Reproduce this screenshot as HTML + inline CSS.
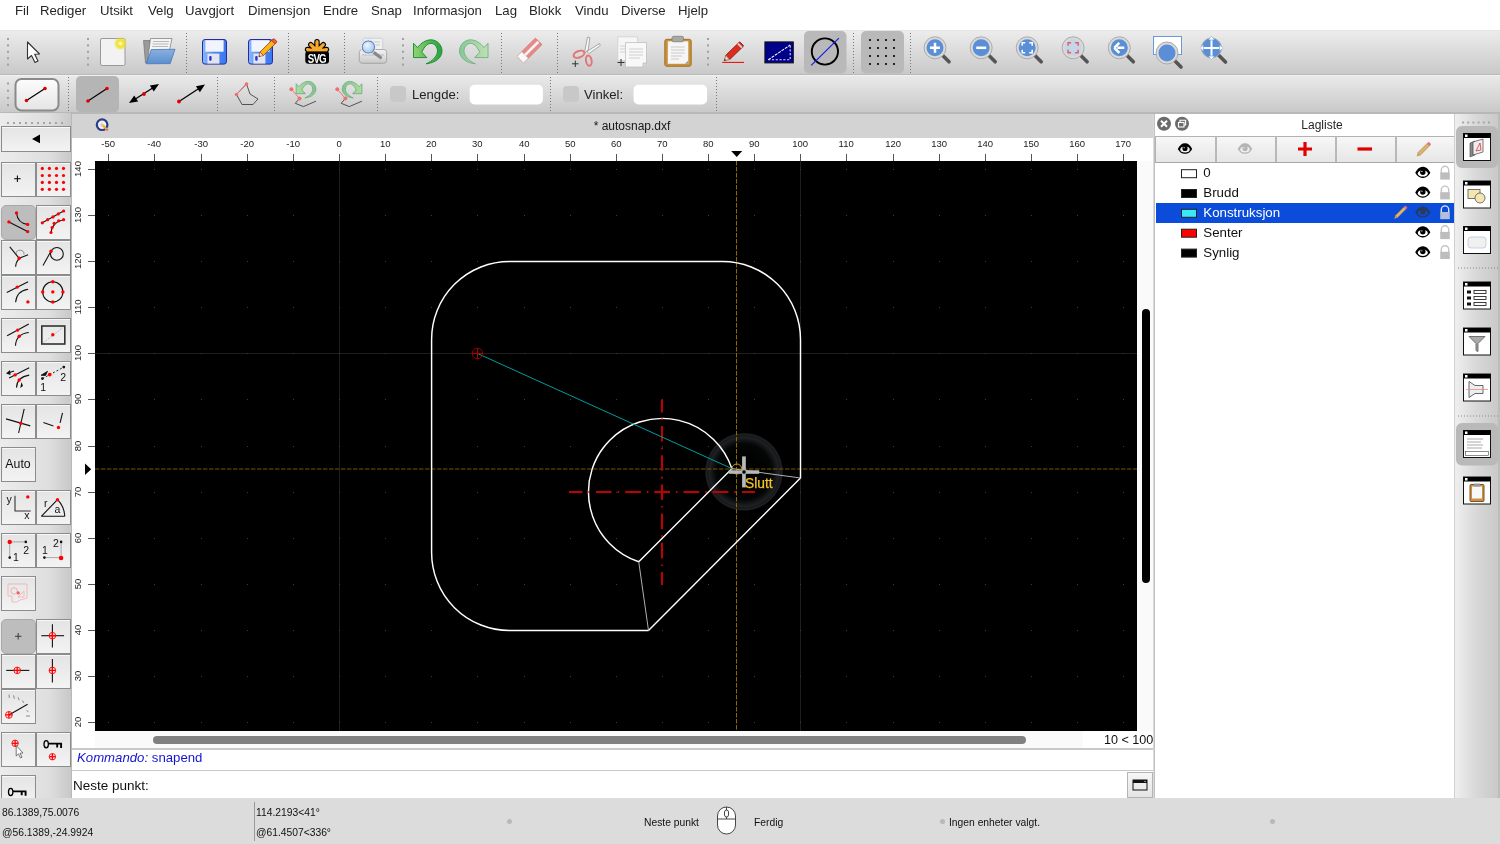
<!DOCTYPE html><html><head><meta charset="utf-8"><style>
html,body{margin:0;padding:0;width:1500px;height:844px;overflow:hidden;background:#fff;font-family:"Liberation Sans", sans-serif;}
.b{position:absolute;box-sizing:border-box;}
.t{position:absolute;white-space:nowrap;line-height:1;font-family:"Liberation Sans", sans-serif;will-change:transform;}
svg.b{overflow:visible;will-change:transform;}
</style></head><body>

<div class="b" style="left:0px;top:0px;width:1500px;height:31px;background:#ffffff;"></div>
<div class="t" style="left:14.50px;top:3.83px;font-size:13.2px;color:#262626;">Fil</div>
<div class="t" style="left:40.30px;top:3.83px;font-size:13.2px;color:#262626;">Rediger</div>
<div class="t" style="left:99.70px;top:3.83px;font-size:13.2px;color:#262626;">Utsikt</div>
<div class="t" style="left:147.70px;top:3.83px;font-size:13.2px;color:#262626;">Velg</div>
<div class="t" style="left:185.30px;top:3.83px;font-size:13.2px;color:#262626;">Uavgjort</div>
<div class="t" style="left:248.30px;top:3.83px;font-size:13.2px;color:#262626;">Dimensjon</div>
<div class="t" style="left:323.30px;top:3.83px;font-size:13.2px;color:#262626;">Endre</div>
<div class="t" style="left:370.70px;top:3.83px;font-size:13.2px;color:#262626;">Snap</div>
<div class="t" style="left:413.30px;top:3.83px;font-size:13.2px;color:#262626;">Informasjon</div>
<div class="t" style="left:495.30px;top:3.83px;font-size:13.2px;color:#262626;">Lag</div>
<div class="t" style="left:529.00px;top:3.83px;font-size:13.2px;color:#262626;">Blokk</div>
<div class="t" style="left:574.70px;top:3.83px;font-size:13.2px;color:#262626;">Vindu</div>
<div class="t" style="left:621.00px;top:3.83px;font-size:13.2px;color:#262626;">Diverse</div>
<div class="t" style="left:678.30px;top:3.83px;font-size:13.2px;color:#262626;">Hjelp</div>
<div class="b" style="left:0px;top:30px;width:1500px;height:1px;background:#e4e4e4;"></div>
<div class="b" style="left:0px;top:31px;width:1500px;height:43px;background:linear-gradient(#ececec,#c9c9c9);"></div>
<div class="b" style="left:0px;top:74px;width:1500px;height:1px;background:#b9b9b9;"></div>
<div class="b" style="left:0px;top:75px;width:1500px;height:1px;background:#f2f2f2;"></div>
<div class="b" style="left:0px;top:76px;width:1500px;height:36px;background:linear-gradient(#e9e9e9,#c9c9c9);"></div>
<div class="b" style="left:0px;top:112px;width:1500px;height:2px;background:#b8b8b8;"></div>
<svg class="b" style="left:0px;top:0px;" width="1500" height="120" viewBox="0 0 1500 120"><rect x="7" y="38" width="2" height="2" fill="#a0a0a0"/><rect x="7" y="44.4" width="2" height="2" fill="#a0a0a0"/><rect x="7" y="50.8" width="2" height="2" fill="#a0a0a0"/><rect x="7" y="57.199999999999996" width="2" height="2" fill="#a0a0a0"/><rect x="7" y="63.599999999999994" width="2" height="2" fill="#a0a0a0"/><rect x="87" y="38" width="2" height="2" fill="#a0a0a0"/><rect x="87" y="44.4" width="2" height="2" fill="#a0a0a0"/><rect x="87" y="50.8" width="2" height="2" fill="#a0a0a0"/><rect x="87" y="57.199999999999996" width="2" height="2" fill="#a0a0a0"/><rect x="87" y="63.599999999999994" width="2" height="2" fill="#a0a0a0"/><rect x="402" y="38" width="2" height="2" fill="#a0a0a0"/><rect x="402" y="44.4" width="2" height="2" fill="#a0a0a0"/><rect x="402" y="50.8" width="2" height="2" fill="#a0a0a0"/><rect x="402" y="57.199999999999996" width="2" height="2" fill="#a0a0a0"/><rect x="402" y="63.599999999999994" width="2" height="2" fill="#a0a0a0"/><rect x="707" y="38" width="2" height="2" fill="#a0a0a0"/><rect x="707" y="44.4" width="2" height="2" fill="#a0a0a0"/><rect x="707" y="50.8" width="2" height="2" fill="#a0a0a0"/><rect x="707" y="57.199999999999996" width="2" height="2" fill="#a0a0a0"/><rect x="707" y="63.599999999999994" width="2" height="2" fill="#a0a0a0"/><rect x="186" y="33" width="1" height="1" fill="#777"/><rect x="186" y="36" width="1" height="1" fill="#777"/><rect x="186" y="39" width="1" height="1" fill="#777"/><rect x="186" y="42" width="1" height="1" fill="#777"/><rect x="186" y="45" width="1" height="1" fill="#777"/><rect x="186" y="48" width="1" height="1" fill="#777"/><rect x="186" y="51" width="1" height="1" fill="#777"/><rect x="186" y="54" width="1" height="1" fill="#777"/><rect x="186" y="57" width="1" height="1" fill="#777"/><rect x="186" y="60" width="1" height="1" fill="#777"/><rect x="186" y="63" width="1" height="1" fill="#777"/><rect x="186" y="66" width="1" height="1" fill="#777"/><rect x="186" y="69" width="1" height="1" fill="#777"/><rect x="186" y="72" width="1" height="1" fill="#777"/><rect x="288" y="33" width="1" height="1" fill="#777"/><rect x="288" y="36" width="1" height="1" fill="#777"/><rect x="288" y="39" width="1" height="1" fill="#777"/><rect x="288" y="42" width="1" height="1" fill="#777"/><rect x="288" y="45" width="1" height="1" fill="#777"/><rect x="288" y="48" width="1" height="1" fill="#777"/><rect x="288" y="51" width="1" height="1" fill="#777"/><rect x="288" y="54" width="1" height="1" fill="#777"/><rect x="288" y="57" width="1" height="1" fill="#777"/><rect x="288" y="60" width="1" height="1" fill="#777"/><rect x="288" y="63" width="1" height="1" fill="#777"/><rect x="288" y="66" width="1" height="1" fill="#777"/><rect x="288" y="69" width="1" height="1" fill="#777"/><rect x="288" y="72" width="1" height="1" fill="#777"/><rect x="344" y="33" width="1" height="1" fill="#777"/><rect x="344" y="36" width="1" height="1" fill="#777"/><rect x="344" y="39" width="1" height="1" fill="#777"/><rect x="344" y="42" width="1" height="1" fill="#777"/><rect x="344" y="45" width="1" height="1" fill="#777"/><rect x="344" y="48" width="1" height="1" fill="#777"/><rect x="344" y="51" width="1" height="1" fill="#777"/><rect x="344" y="54" width="1" height="1" fill="#777"/><rect x="344" y="57" width="1" height="1" fill="#777"/><rect x="344" y="60" width="1" height="1" fill="#777"/><rect x="344" y="63" width="1" height="1" fill="#777"/><rect x="344" y="66" width="1" height="1" fill="#777"/><rect x="344" y="69" width="1" height="1" fill="#777"/><rect x="344" y="72" width="1" height="1" fill="#777"/><rect x="501" y="33" width="1" height="1" fill="#777"/><rect x="501" y="36" width="1" height="1" fill="#777"/><rect x="501" y="39" width="1" height="1" fill="#777"/><rect x="501" y="42" width="1" height="1" fill="#777"/><rect x="501" y="45" width="1" height="1" fill="#777"/><rect x="501" y="48" width="1" height="1" fill="#777"/><rect x="501" y="51" width="1" height="1" fill="#777"/><rect x="501" y="54" width="1" height="1" fill="#777"/><rect x="501" y="57" width="1" height="1" fill="#777"/><rect x="501" y="60" width="1" height="1" fill="#777"/><rect x="501" y="63" width="1" height="1" fill="#777"/><rect x="501" y="66" width="1" height="1" fill="#777"/><rect x="501" y="69" width="1" height="1" fill="#777"/><rect x="501" y="72" width="1" height="1" fill="#777"/><rect x="557" y="33" width="1" height="1" fill="#777"/><rect x="557" y="36" width="1" height="1" fill="#777"/><rect x="557" y="39" width="1" height="1" fill="#777"/><rect x="557" y="42" width="1" height="1" fill="#777"/><rect x="557" y="45" width="1" height="1" fill="#777"/><rect x="557" y="48" width="1" height="1" fill="#777"/><rect x="557" y="51" width="1" height="1" fill="#777"/><rect x="557" y="54" width="1" height="1" fill="#777"/><rect x="557" y="57" width="1" height="1" fill="#777"/><rect x="557" y="60" width="1" height="1" fill="#777"/><rect x="557" y="63" width="1" height="1" fill="#777"/><rect x="557" y="66" width="1" height="1" fill="#777"/><rect x="557" y="69" width="1" height="1" fill="#777"/><rect x="557" y="72" width="1" height="1" fill="#777"/><rect x="853" y="33" width="1" height="1" fill="#777"/><rect x="853" y="36" width="1" height="1" fill="#777"/><rect x="853" y="39" width="1" height="1" fill="#777"/><rect x="853" y="42" width="1" height="1" fill="#777"/><rect x="853" y="45" width="1" height="1" fill="#777"/><rect x="853" y="48" width="1" height="1" fill="#777"/><rect x="853" y="51" width="1" height="1" fill="#777"/><rect x="853" y="54" width="1" height="1" fill="#777"/><rect x="853" y="57" width="1" height="1" fill="#777"/><rect x="853" y="60" width="1" height="1" fill="#777"/><rect x="853" y="63" width="1" height="1" fill="#777"/><rect x="853" y="66" width="1" height="1" fill="#777"/><rect x="853" y="69" width="1" height="1" fill="#777"/><rect x="853" y="72" width="1" height="1" fill="#777"/><rect x="910" y="33" width="1" height="1" fill="#777"/><rect x="910" y="36" width="1" height="1" fill="#777"/><rect x="910" y="39" width="1" height="1" fill="#777"/><rect x="910" y="42" width="1" height="1" fill="#777"/><rect x="910" y="45" width="1" height="1" fill="#777"/><rect x="910" y="48" width="1" height="1" fill="#777"/><rect x="910" y="51" width="1" height="1" fill="#777"/><rect x="910" y="54" width="1" height="1" fill="#777"/><rect x="910" y="57" width="1" height="1" fill="#777"/><rect x="910" y="60" width="1" height="1" fill="#777"/><rect x="910" y="63" width="1" height="1" fill="#777"/><rect x="910" y="66" width="1" height="1" fill="#777"/><rect x="910" y="69" width="1" height="1" fill="#777"/><rect x="910" y="72" width="1" height="1" fill="#777"/><rect x="7" y="82.5" width="2" height="2" fill="#a0a0a0"/><rect x="7" y="89.7" width="2" height="2" fill="#a0a0a0"/><rect x="7" y="96.9" width="2" height="2" fill="#a0a0a0"/><rect x="7" y="104.1" width="2" height="2" fill="#a0a0a0"/><rect x="68" y="77" width="1" height="1" fill="#777"/><rect x="68" y="80" width="1" height="1" fill="#777"/><rect x="68" y="83" width="1" height="1" fill="#777"/><rect x="68" y="86" width="1" height="1" fill="#777"/><rect x="68" y="89" width="1" height="1" fill="#777"/><rect x="68" y="92" width="1" height="1" fill="#777"/><rect x="68" y="95" width="1" height="1" fill="#777"/><rect x="68" y="98" width="1" height="1" fill="#777"/><rect x="68" y="101" width="1" height="1" fill="#777"/><rect x="68" y="104" width="1" height="1" fill="#777"/><rect x="68" y="107" width="1" height="1" fill="#777"/><rect x="68" y="110" width="1" height="1" fill="#777"/><rect x="217" y="77" width="1" height="1" fill="#777"/><rect x="217" y="80" width="1" height="1" fill="#777"/><rect x="217" y="83" width="1" height="1" fill="#777"/><rect x="217" y="86" width="1" height="1" fill="#777"/><rect x="217" y="89" width="1" height="1" fill="#777"/><rect x="217" y="92" width="1" height="1" fill="#777"/><rect x="217" y="95" width="1" height="1" fill="#777"/><rect x="217" y="98" width="1" height="1" fill="#777"/><rect x="217" y="101" width="1" height="1" fill="#777"/><rect x="217" y="104" width="1" height="1" fill="#777"/><rect x="217" y="107" width="1" height="1" fill="#777"/><rect x="217" y="110" width="1" height="1" fill="#777"/><rect x="274" y="77" width="1" height="1" fill="#777"/><rect x="274" y="80" width="1" height="1" fill="#777"/><rect x="274" y="83" width="1" height="1" fill="#777"/><rect x="274" y="86" width="1" height="1" fill="#777"/><rect x="274" y="89" width="1" height="1" fill="#777"/><rect x="274" y="92" width="1" height="1" fill="#777"/><rect x="274" y="95" width="1" height="1" fill="#777"/><rect x="274" y="98" width="1" height="1" fill="#777"/><rect x="274" y="101" width="1" height="1" fill="#777"/><rect x="274" y="104" width="1" height="1" fill="#777"/><rect x="274" y="107" width="1" height="1" fill="#777"/><rect x="274" y="110" width="1" height="1" fill="#777"/><rect x="377" y="77" width="1" height="1" fill="#777"/><rect x="377" y="80" width="1" height="1" fill="#777"/><rect x="377" y="83" width="1" height="1" fill="#777"/><rect x="377" y="86" width="1" height="1" fill="#777"/><rect x="377" y="89" width="1" height="1" fill="#777"/><rect x="377" y="92" width="1" height="1" fill="#777"/><rect x="377" y="95" width="1" height="1" fill="#777"/><rect x="377" y="98" width="1" height="1" fill="#777"/><rect x="377" y="101" width="1" height="1" fill="#777"/><rect x="377" y="104" width="1" height="1" fill="#777"/><rect x="377" y="107" width="1" height="1" fill="#777"/><rect x="377" y="110" width="1" height="1" fill="#777"/><rect x="550" y="77" width="1" height="1" fill="#777"/><rect x="550" y="80" width="1" height="1" fill="#777"/><rect x="550" y="83" width="1" height="1" fill="#777"/><rect x="550" y="86" width="1" height="1" fill="#777"/><rect x="550" y="89" width="1" height="1" fill="#777"/><rect x="550" y="92" width="1" height="1" fill="#777"/><rect x="550" y="95" width="1" height="1" fill="#777"/><rect x="550" y="98" width="1" height="1" fill="#777"/><rect x="550" y="101" width="1" height="1" fill="#777"/><rect x="550" y="104" width="1" height="1" fill="#777"/><rect x="550" y="107" width="1" height="1" fill="#777"/><rect x="550" y="110" width="1" height="1" fill="#777"/><rect x="716" y="77" width="1" height="1" fill="#777"/><rect x="716" y="80" width="1" height="1" fill="#777"/><rect x="716" y="83" width="1" height="1" fill="#777"/><rect x="716" y="86" width="1" height="1" fill="#777"/><rect x="716" y="89" width="1" height="1" fill="#777"/><rect x="716" y="92" width="1" height="1" fill="#777"/><rect x="716" y="95" width="1" height="1" fill="#777"/><rect x="716" y="98" width="1" height="1" fill="#777"/><rect x="716" y="101" width="1" height="1" fill="#777"/><rect x="716" y="104" width="1" height="1" fill="#777"/><rect x="716" y="107" width="1" height="1" fill="#777"/><rect x="716" y="110" width="1" height="1" fill="#777"/></svg>
<div class="b" style="left:72px;top:114px;width:1083px;height:24px;background:#d3d3d3;"></div>
<div class="t" style="left:432.00px;width:400px;text-align:center;top:119.64px;font-size:12px;color:#161616;">* autosnap.dxf</div>
<div class="b" style="left:72px;top:138px;width:1083px;height:23px;background:#ffffff;"></div>
<div class="b" style="left:72px;top:161px;width:23px;height:588px;background:#ffffff;"></div>
<div class="b" style="left:1137px;top:161px;width:18px;height:570px;background:#fafafa;"></div>
<div class="b" style="left:95px;top:731px;width:988px;height:18px;background:#fafafa;"></div>
<div class="b" style="left:1083px;top:731px;width:72px;height:18px;background:#ffffff;"></div>
<div class="b" style="left:1142px;top:309px;width:8px;height:274px;background:#000;border-radius:4px;"></div>
<div class="b" style="left:152.5px;top:736px;width:873px;height:8px;background:#808080;border-radius:4px;"></div>
<div class="t" style="right:347.00px;top:733.83px;font-size:12.6px;color:#111;">10 &lt; 100</div>
<svg class="b" style="left:0px;top:0px;" width="1500" height="844" viewBox="0 0 1500 844"><line x1="108.5" y1="154" x2="108.5" y2="161" stroke="#555" stroke-width="1"/><text x="108.2" y="147.1" font-size="9.5" text-anchor="middle" fill="#222" font-family="Liberation Sans">-50</text><line x1="154.5" y1="154" x2="154.5" y2="161" stroke="#555" stroke-width="1"/><text x="154.2" y="147.1" font-size="9.5" text-anchor="middle" fill="#222" font-family="Liberation Sans">-40</text><line x1="201.5" y1="154" x2="201.5" y2="161" stroke="#555" stroke-width="1"/><text x="201.2" y="147.1" font-size="9.5" text-anchor="middle" fill="#222" font-family="Liberation Sans">-30</text><line x1="247.5" y1="154" x2="247.5" y2="161" stroke="#555" stroke-width="1"/><text x="247.2" y="147.1" font-size="9.5" text-anchor="middle" fill="#222" font-family="Liberation Sans">-20</text><line x1="293.5" y1="154" x2="293.5" y2="161" stroke="#555" stroke-width="1"/><text x="293.2" y="147.1" font-size="9.5" text-anchor="middle" fill="#222" font-family="Liberation Sans">-10</text><line x1="339.5" y1="154" x2="339.5" y2="161" stroke="#555" stroke-width="1"/><text x="339.2" y="147.1" font-size="9.5" text-anchor="middle" fill="#222" font-family="Liberation Sans">0</text><line x1="385.5" y1="154" x2="385.5" y2="161" stroke="#555" stroke-width="1"/><text x="385.2" y="147.1" font-size="9.5" text-anchor="middle" fill="#222" font-family="Liberation Sans">10</text><line x1="431.5" y1="154" x2="431.5" y2="161" stroke="#555" stroke-width="1"/><text x="431.2" y="147.1" font-size="9.5" text-anchor="middle" fill="#222" font-family="Liberation Sans">20</text><line x1="477.5" y1="154" x2="477.5" y2="161" stroke="#555" stroke-width="1"/><text x="477.2" y="147.1" font-size="9.5" text-anchor="middle" fill="#222" font-family="Liberation Sans">30</text><line x1="524.5" y1="154" x2="524.5" y2="161" stroke="#555" stroke-width="1"/><text x="524.2" y="147.1" font-size="9.5" text-anchor="middle" fill="#222" font-family="Liberation Sans">40</text><line x1="570.5" y1="154" x2="570.5" y2="161" stroke="#555" stroke-width="1"/><text x="570.2" y="147.1" font-size="9.5" text-anchor="middle" fill="#222" font-family="Liberation Sans">50</text><line x1="616.5" y1="154" x2="616.5" y2="161" stroke="#555" stroke-width="1"/><text x="616.2" y="147.1" font-size="9.5" text-anchor="middle" fill="#222" font-family="Liberation Sans">60</text><line x1="662.5" y1="154" x2="662.5" y2="161" stroke="#555" stroke-width="1"/><text x="662.2" y="147.1" font-size="9.5" text-anchor="middle" fill="#222" font-family="Liberation Sans">70</text><line x1="708.5" y1="154" x2="708.5" y2="161" stroke="#555" stroke-width="1"/><text x="708.2" y="147.1" font-size="9.5" text-anchor="middle" fill="#222" font-family="Liberation Sans">80</text><line x1="754.5" y1="154" x2="754.5" y2="161" stroke="#555" stroke-width="1"/><text x="754.2" y="147.1" font-size="9.5" text-anchor="middle" fill="#222" font-family="Liberation Sans">90</text><line x1="800.5" y1="154" x2="800.5" y2="161" stroke="#555" stroke-width="1"/><text x="800.2" y="147.1" font-size="9.5" text-anchor="middle" fill="#222" font-family="Liberation Sans">100</text><line x1="846.5" y1="154" x2="846.5" y2="161" stroke="#555" stroke-width="1"/><text x="846.2" y="147.1" font-size="9.5" text-anchor="middle" fill="#222" font-family="Liberation Sans">110</text><line x1="893.5" y1="154" x2="893.5" y2="161" stroke="#555" stroke-width="1"/><text x="893.2" y="147.1" font-size="9.5" text-anchor="middle" fill="#222" font-family="Liberation Sans">120</text><line x1="939.5" y1="154" x2="939.5" y2="161" stroke="#555" stroke-width="1"/><text x="939.2" y="147.1" font-size="9.5" text-anchor="middle" fill="#222" font-family="Liberation Sans">130</text><line x1="985.5" y1="154" x2="985.5" y2="161" stroke="#555" stroke-width="1"/><text x="985.2" y="147.1" font-size="9.5" text-anchor="middle" fill="#222" font-family="Liberation Sans">140</text><line x1="1031.5" y1="154" x2="1031.5" y2="161" stroke="#555" stroke-width="1"/><text x="1031.2" y="147.1" font-size="9.5" text-anchor="middle" fill="#222" font-family="Liberation Sans">150</text><line x1="1077.5" y1="154" x2="1077.5" y2="161" stroke="#555" stroke-width="1"/><text x="1077.2" y="147.1" font-size="9.5" text-anchor="middle" fill="#222" font-family="Liberation Sans">160</text><line x1="1123.5" y1="154" x2="1123.5" y2="161" stroke="#555" stroke-width="1"/><text x="1123.2" y="147.1" font-size="9.5" text-anchor="middle" fill="#222" font-family="Liberation Sans">170</text><line x1="88" y1="722.5" x2="95" y2="722.5" stroke="#555" stroke-width="1"/><text transform="translate(81.0 722.0) rotate(-90)" x="0" y="0" font-size="9.5" text-anchor="middle" fill="#222" font-family="Liberation Sans">20</text><line x1="88" y1="676.5" x2="95" y2="676.5" stroke="#555" stroke-width="1"/><text transform="translate(81.0 676.0) rotate(-90)" x="0" y="0" font-size="9.5" text-anchor="middle" fill="#222" font-family="Liberation Sans">30</text><line x1="88" y1="630.5" x2="95" y2="630.5" stroke="#555" stroke-width="1"/><text transform="translate(81.0 630.0) rotate(-90)" x="0" y="0" font-size="9.5" text-anchor="middle" fill="#222" font-family="Liberation Sans">40</text><line x1="88" y1="584.5" x2="95" y2="584.5" stroke="#555" stroke-width="1"/><text transform="translate(81.0 584.0) rotate(-90)" x="0" y="0" font-size="9.5" text-anchor="middle" fill="#222" font-family="Liberation Sans">50</text><line x1="88" y1="538.5" x2="95" y2="538.5" stroke="#555" stroke-width="1"/><text transform="translate(81.0 538.0) rotate(-90)" x="0" y="0" font-size="9.5" text-anchor="middle" fill="#222" font-family="Liberation Sans">60</text><line x1="88" y1="492.5" x2="95" y2="492.5" stroke="#555" stroke-width="1"/><text transform="translate(81.0 492.0) rotate(-90)" x="0" y="0" font-size="9.5" text-anchor="middle" fill="#222" font-family="Liberation Sans">70</text><line x1="88" y1="446.5" x2="95" y2="446.5" stroke="#555" stroke-width="1"/><text transform="translate(81.0 446.0) rotate(-90)" x="0" y="0" font-size="9.5" text-anchor="middle" fill="#222" font-family="Liberation Sans">80</text><line x1="88" y1="399.5" x2="95" y2="399.5" stroke="#555" stroke-width="1"/><text transform="translate(81.0 399.0) rotate(-90)" x="0" y="0" font-size="9.5" text-anchor="middle" fill="#222" font-family="Liberation Sans">90</text><line x1="88" y1="353.5" x2="95" y2="353.5" stroke="#555" stroke-width="1"/><text transform="translate(81.0 353.0) rotate(-90)" x="0" y="0" font-size="9.5" text-anchor="middle" fill="#222" font-family="Liberation Sans">100</text><line x1="88" y1="307.5" x2="95" y2="307.5" stroke="#555" stroke-width="1"/><text transform="translate(81.0 307.0) rotate(-90)" x="0" y="0" font-size="9.5" text-anchor="middle" fill="#222" font-family="Liberation Sans">110</text><line x1="88" y1="261.5" x2="95" y2="261.5" stroke="#555" stroke-width="1"/><text transform="translate(81.0 261.0) rotate(-90)" x="0" y="0" font-size="9.5" text-anchor="middle" fill="#222" font-family="Liberation Sans">120</text><line x1="88" y1="215.5" x2="95" y2="215.5" stroke="#555" stroke-width="1"/><text transform="translate(81.0 215.0) rotate(-90)" x="0" y="0" font-size="9.5" text-anchor="middle" fill="#222" font-family="Liberation Sans">130</text><line x1="88" y1="169.5" x2="95" y2="169.5" stroke="#555" stroke-width="1"/><text transform="translate(81.0 169.0) rotate(-90)" x="0" y="0" font-size="9.5" text-anchor="middle" fill="#222" font-family="Liberation Sans">140</text><polygon points="731.2,151 742.2,151 736.7,157" fill="#000"/><polygon points="85,463.6 91.2,469.3 85,475" fill="#000"/></svg>
<svg class="b" style="left:95px;top:161px;" width="1042" height="570" viewBox="0 0 1042 570"><rect x="0" y="0" width="1042" height="570" fill="#000"/><line x1="244.5" y1="0" x2="244.5" y2="570" stroke="#1e1e1e" stroke-width="1"/><line x1="705.5" y1="0" x2="705.5" y2="570" stroke="#1e1e1e" stroke-width="1"/><line x1="0" y1="192.5" x2="1042" y2="192.5" stroke="#1e1e1e" stroke-width="1"/><rect x="13" y="561" width="1" height="1" fill="#3c3c3c"/><rect x="13" y="515" width="1" height="1" fill="#3c3c3c"/><rect x="13" y="469" width="1" height="1" fill="#3c3c3c"/><rect x="13" y="423" width="1" height="1" fill="#3c3c3c"/><rect x="13" y="377" width="1" height="1" fill="#3c3c3c"/><rect x="13" y="331" width="1" height="1" fill="#3c3c3c"/><rect x="13" y="285" width="1" height="1" fill="#3c3c3c"/><rect x="13" y="238" width="1" height="1" fill="#3c3c3c"/><rect x="13" y="192" width="1" height="1" fill="#3c3c3c"/><rect x="13" y="146" width="1" height="1" fill="#3c3c3c"/><rect x="13" y="100" width="1" height="1" fill="#3c3c3c"/><rect x="13" y="54" width="1" height="1" fill="#3c3c3c"/><rect x="13" y="8" width="1" height="1" fill="#3c3c3c"/><rect x="59" y="561" width="1" height="1" fill="#3c3c3c"/><rect x="59" y="515" width="1" height="1" fill="#3c3c3c"/><rect x="59" y="469" width="1" height="1" fill="#3c3c3c"/><rect x="59" y="423" width="1" height="1" fill="#3c3c3c"/><rect x="59" y="377" width="1" height="1" fill="#3c3c3c"/><rect x="59" y="331" width="1" height="1" fill="#3c3c3c"/><rect x="59" y="285" width="1" height="1" fill="#3c3c3c"/><rect x="59" y="238" width="1" height="1" fill="#3c3c3c"/><rect x="59" y="192" width="1" height="1" fill="#3c3c3c"/><rect x="59" y="146" width="1" height="1" fill="#3c3c3c"/><rect x="59" y="100" width="1" height="1" fill="#3c3c3c"/><rect x="59" y="54" width="1" height="1" fill="#3c3c3c"/><rect x="59" y="8" width="1" height="1" fill="#3c3c3c"/><rect x="106" y="561" width="1" height="1" fill="#3c3c3c"/><rect x="106" y="515" width="1" height="1" fill="#3c3c3c"/><rect x="106" y="469" width="1" height="1" fill="#3c3c3c"/><rect x="106" y="423" width="1" height="1" fill="#3c3c3c"/><rect x="106" y="377" width="1" height="1" fill="#3c3c3c"/><rect x="106" y="331" width="1" height="1" fill="#3c3c3c"/><rect x="106" y="285" width="1" height="1" fill="#3c3c3c"/><rect x="106" y="238" width="1" height="1" fill="#3c3c3c"/><rect x="106" y="192" width="1" height="1" fill="#3c3c3c"/><rect x="106" y="146" width="1" height="1" fill="#3c3c3c"/><rect x="106" y="100" width="1" height="1" fill="#3c3c3c"/><rect x="106" y="54" width="1" height="1" fill="#3c3c3c"/><rect x="106" y="8" width="1" height="1" fill="#3c3c3c"/><rect x="152" y="561" width="1" height="1" fill="#3c3c3c"/><rect x="152" y="515" width="1" height="1" fill="#3c3c3c"/><rect x="152" y="469" width="1" height="1" fill="#3c3c3c"/><rect x="152" y="423" width="1" height="1" fill="#3c3c3c"/><rect x="152" y="377" width="1" height="1" fill="#3c3c3c"/><rect x="152" y="331" width="1" height="1" fill="#3c3c3c"/><rect x="152" y="285" width="1" height="1" fill="#3c3c3c"/><rect x="152" y="238" width="1" height="1" fill="#3c3c3c"/><rect x="152" y="192" width="1" height="1" fill="#3c3c3c"/><rect x="152" y="146" width="1" height="1" fill="#3c3c3c"/><rect x="152" y="100" width="1" height="1" fill="#3c3c3c"/><rect x="152" y="54" width="1" height="1" fill="#3c3c3c"/><rect x="152" y="8" width="1" height="1" fill="#3c3c3c"/><rect x="198" y="561" width="1" height="1" fill="#3c3c3c"/><rect x="198" y="515" width="1" height="1" fill="#3c3c3c"/><rect x="198" y="469" width="1" height="1" fill="#3c3c3c"/><rect x="198" y="423" width="1" height="1" fill="#3c3c3c"/><rect x="198" y="377" width="1" height="1" fill="#3c3c3c"/><rect x="198" y="331" width="1" height="1" fill="#3c3c3c"/><rect x="198" y="285" width="1" height="1" fill="#3c3c3c"/><rect x="198" y="238" width="1" height="1" fill="#3c3c3c"/><rect x="198" y="192" width="1" height="1" fill="#3c3c3c"/><rect x="198" y="146" width="1" height="1" fill="#3c3c3c"/><rect x="198" y="100" width="1" height="1" fill="#3c3c3c"/><rect x="198" y="54" width="1" height="1" fill="#3c3c3c"/><rect x="198" y="8" width="1" height="1" fill="#3c3c3c"/><rect x="244" y="561" width="1" height="1" fill="#3c3c3c"/><rect x="244" y="515" width="1" height="1" fill="#3c3c3c"/><rect x="244" y="469" width="1" height="1" fill="#3c3c3c"/><rect x="244" y="423" width="1" height="1" fill="#3c3c3c"/><rect x="244" y="377" width="1" height="1" fill="#3c3c3c"/><rect x="244" y="331" width="1" height="1" fill="#3c3c3c"/><rect x="244" y="285" width="1" height="1" fill="#3c3c3c"/><rect x="244" y="238" width="1" height="1" fill="#3c3c3c"/><rect x="244" y="192" width="1" height="1" fill="#3c3c3c"/><rect x="244" y="146" width="1" height="1" fill="#3c3c3c"/><rect x="244" y="100" width="1" height="1" fill="#3c3c3c"/><rect x="244" y="54" width="1" height="1" fill="#3c3c3c"/><rect x="244" y="8" width="1" height="1" fill="#3c3c3c"/><rect x="290" y="561" width="1" height="1" fill="#3c3c3c"/><rect x="290" y="515" width="1" height="1" fill="#3c3c3c"/><rect x="290" y="469" width="1" height="1" fill="#3c3c3c"/><rect x="290" y="423" width="1" height="1" fill="#3c3c3c"/><rect x="290" y="377" width="1" height="1" fill="#3c3c3c"/><rect x="290" y="331" width="1" height="1" fill="#3c3c3c"/><rect x="290" y="285" width="1" height="1" fill="#3c3c3c"/><rect x="290" y="238" width="1" height="1" fill="#3c3c3c"/><rect x="290" y="192" width="1" height="1" fill="#3c3c3c"/><rect x="290" y="146" width="1" height="1" fill="#3c3c3c"/><rect x="290" y="100" width="1" height="1" fill="#3c3c3c"/><rect x="290" y="54" width="1" height="1" fill="#3c3c3c"/><rect x="290" y="8" width="1" height="1" fill="#3c3c3c"/><rect x="336" y="561" width="1" height="1" fill="#3c3c3c"/><rect x="336" y="515" width="1" height="1" fill="#3c3c3c"/><rect x="336" y="469" width="1" height="1" fill="#3c3c3c"/><rect x="336" y="423" width="1" height="1" fill="#3c3c3c"/><rect x="336" y="377" width="1" height="1" fill="#3c3c3c"/><rect x="336" y="331" width="1" height="1" fill="#3c3c3c"/><rect x="336" y="285" width="1" height="1" fill="#3c3c3c"/><rect x="336" y="238" width="1" height="1" fill="#3c3c3c"/><rect x="336" y="192" width="1" height="1" fill="#3c3c3c"/><rect x="336" y="146" width="1" height="1" fill="#3c3c3c"/><rect x="336" y="100" width="1" height="1" fill="#3c3c3c"/><rect x="336" y="54" width="1" height="1" fill="#3c3c3c"/><rect x="336" y="8" width="1" height="1" fill="#3c3c3c"/><rect x="382" y="561" width="1" height="1" fill="#3c3c3c"/><rect x="382" y="515" width="1" height="1" fill="#3c3c3c"/><rect x="382" y="469" width="1" height="1" fill="#3c3c3c"/><rect x="382" y="423" width="1" height="1" fill="#3c3c3c"/><rect x="382" y="377" width="1" height="1" fill="#3c3c3c"/><rect x="382" y="331" width="1" height="1" fill="#3c3c3c"/><rect x="382" y="285" width="1" height="1" fill="#3c3c3c"/><rect x="382" y="238" width="1" height="1" fill="#3c3c3c"/><rect x="382" y="192" width="1" height="1" fill="#3c3c3c"/><rect x="382" y="146" width="1" height="1" fill="#3c3c3c"/><rect x="382" y="100" width="1" height="1" fill="#3c3c3c"/><rect x="382" y="54" width="1" height="1" fill="#3c3c3c"/><rect x="382" y="8" width="1" height="1" fill="#3c3c3c"/><rect x="429" y="561" width="1" height="1" fill="#3c3c3c"/><rect x="429" y="515" width="1" height="1" fill="#3c3c3c"/><rect x="429" y="469" width="1" height="1" fill="#3c3c3c"/><rect x="429" y="423" width="1" height="1" fill="#3c3c3c"/><rect x="429" y="377" width="1" height="1" fill="#3c3c3c"/><rect x="429" y="331" width="1" height="1" fill="#3c3c3c"/><rect x="429" y="285" width="1" height="1" fill="#3c3c3c"/><rect x="429" y="238" width="1" height="1" fill="#3c3c3c"/><rect x="429" y="192" width="1" height="1" fill="#3c3c3c"/><rect x="429" y="146" width="1" height="1" fill="#3c3c3c"/><rect x="429" y="100" width="1" height="1" fill="#3c3c3c"/><rect x="429" y="54" width="1" height="1" fill="#3c3c3c"/><rect x="429" y="8" width="1" height="1" fill="#3c3c3c"/><rect x="475" y="561" width="1" height="1" fill="#3c3c3c"/><rect x="475" y="515" width="1" height="1" fill="#3c3c3c"/><rect x="475" y="469" width="1" height="1" fill="#3c3c3c"/><rect x="475" y="423" width="1" height="1" fill="#3c3c3c"/><rect x="475" y="377" width="1" height="1" fill="#3c3c3c"/><rect x="475" y="331" width="1" height="1" fill="#3c3c3c"/><rect x="475" y="285" width="1" height="1" fill="#3c3c3c"/><rect x="475" y="238" width="1" height="1" fill="#3c3c3c"/><rect x="475" y="192" width="1" height="1" fill="#3c3c3c"/><rect x="475" y="146" width="1" height="1" fill="#3c3c3c"/><rect x="475" y="100" width="1" height="1" fill="#3c3c3c"/><rect x="475" y="54" width="1" height="1" fill="#3c3c3c"/><rect x="475" y="8" width="1" height="1" fill="#3c3c3c"/><rect x="521" y="561" width="1" height="1" fill="#3c3c3c"/><rect x="521" y="515" width="1" height="1" fill="#3c3c3c"/><rect x="521" y="469" width="1" height="1" fill="#3c3c3c"/><rect x="521" y="423" width="1" height="1" fill="#3c3c3c"/><rect x="521" y="377" width="1" height="1" fill="#3c3c3c"/><rect x="521" y="331" width="1" height="1" fill="#3c3c3c"/><rect x="521" y="285" width="1" height="1" fill="#3c3c3c"/><rect x="521" y="238" width="1" height="1" fill="#3c3c3c"/><rect x="521" y="192" width="1" height="1" fill="#3c3c3c"/><rect x="521" y="146" width="1" height="1" fill="#3c3c3c"/><rect x="521" y="100" width="1" height="1" fill="#3c3c3c"/><rect x="521" y="54" width="1" height="1" fill="#3c3c3c"/><rect x="521" y="8" width="1" height="1" fill="#3c3c3c"/><rect x="567" y="561" width="1" height="1" fill="#3c3c3c"/><rect x="567" y="515" width="1" height="1" fill="#3c3c3c"/><rect x="567" y="469" width="1" height="1" fill="#3c3c3c"/><rect x="567" y="423" width="1" height="1" fill="#3c3c3c"/><rect x="567" y="377" width="1" height="1" fill="#3c3c3c"/><rect x="567" y="331" width="1" height="1" fill="#3c3c3c"/><rect x="567" y="285" width="1" height="1" fill="#3c3c3c"/><rect x="567" y="238" width="1" height="1" fill="#3c3c3c"/><rect x="567" y="192" width="1" height="1" fill="#3c3c3c"/><rect x="567" y="146" width="1" height="1" fill="#3c3c3c"/><rect x="567" y="100" width="1" height="1" fill="#3c3c3c"/><rect x="567" y="54" width="1" height="1" fill="#3c3c3c"/><rect x="567" y="8" width="1" height="1" fill="#3c3c3c"/><rect x="613" y="561" width="1" height="1" fill="#3c3c3c"/><rect x="613" y="515" width="1" height="1" fill="#3c3c3c"/><rect x="613" y="469" width="1" height="1" fill="#3c3c3c"/><rect x="613" y="423" width="1" height="1" fill="#3c3c3c"/><rect x="613" y="377" width="1" height="1" fill="#3c3c3c"/><rect x="613" y="331" width="1" height="1" fill="#3c3c3c"/><rect x="613" y="285" width="1" height="1" fill="#3c3c3c"/><rect x="613" y="238" width="1" height="1" fill="#3c3c3c"/><rect x="613" y="192" width="1" height="1" fill="#3c3c3c"/><rect x="613" y="146" width="1" height="1" fill="#3c3c3c"/><rect x="613" y="100" width="1" height="1" fill="#3c3c3c"/><rect x="613" y="54" width="1" height="1" fill="#3c3c3c"/><rect x="613" y="8" width="1" height="1" fill="#3c3c3c"/><rect x="659" y="561" width="1" height="1" fill="#3c3c3c"/><rect x="659" y="515" width="1" height="1" fill="#3c3c3c"/><rect x="659" y="469" width="1" height="1" fill="#3c3c3c"/><rect x="659" y="423" width="1" height="1" fill="#3c3c3c"/><rect x="659" y="377" width="1" height="1" fill="#3c3c3c"/><rect x="659" y="331" width="1" height="1" fill="#3c3c3c"/><rect x="659" y="285" width="1" height="1" fill="#3c3c3c"/><rect x="659" y="238" width="1" height="1" fill="#3c3c3c"/><rect x="659" y="192" width="1" height="1" fill="#3c3c3c"/><rect x="659" y="146" width="1" height="1" fill="#3c3c3c"/><rect x="659" y="100" width="1" height="1" fill="#3c3c3c"/><rect x="659" y="54" width="1" height="1" fill="#3c3c3c"/><rect x="659" y="8" width="1" height="1" fill="#3c3c3c"/><rect x="705" y="561" width="1" height="1" fill="#3c3c3c"/><rect x="705" y="515" width="1" height="1" fill="#3c3c3c"/><rect x="705" y="469" width="1" height="1" fill="#3c3c3c"/><rect x="705" y="423" width="1" height="1" fill="#3c3c3c"/><rect x="705" y="377" width="1" height="1" fill="#3c3c3c"/><rect x="705" y="331" width="1" height="1" fill="#3c3c3c"/><rect x="705" y="285" width="1" height="1" fill="#3c3c3c"/><rect x="705" y="238" width="1" height="1" fill="#3c3c3c"/><rect x="705" y="192" width="1" height="1" fill="#3c3c3c"/><rect x="705" y="146" width="1" height="1" fill="#3c3c3c"/><rect x="705" y="100" width="1" height="1" fill="#3c3c3c"/><rect x="705" y="54" width="1" height="1" fill="#3c3c3c"/><rect x="705" y="8" width="1" height="1" fill="#3c3c3c"/><rect x="751" y="561" width="1" height="1" fill="#3c3c3c"/><rect x="751" y="515" width="1" height="1" fill="#3c3c3c"/><rect x="751" y="469" width="1" height="1" fill="#3c3c3c"/><rect x="751" y="423" width="1" height="1" fill="#3c3c3c"/><rect x="751" y="377" width="1" height="1" fill="#3c3c3c"/><rect x="751" y="331" width="1" height="1" fill="#3c3c3c"/><rect x="751" y="285" width="1" height="1" fill="#3c3c3c"/><rect x="751" y="238" width="1" height="1" fill="#3c3c3c"/><rect x="751" y="192" width="1" height="1" fill="#3c3c3c"/><rect x="751" y="146" width="1" height="1" fill="#3c3c3c"/><rect x="751" y="100" width="1" height="1" fill="#3c3c3c"/><rect x="751" y="54" width="1" height="1" fill="#3c3c3c"/><rect x="751" y="8" width="1" height="1" fill="#3c3c3c"/><rect x="798" y="561" width="1" height="1" fill="#3c3c3c"/><rect x="798" y="515" width="1" height="1" fill="#3c3c3c"/><rect x="798" y="469" width="1" height="1" fill="#3c3c3c"/><rect x="798" y="423" width="1" height="1" fill="#3c3c3c"/><rect x="798" y="377" width="1" height="1" fill="#3c3c3c"/><rect x="798" y="331" width="1" height="1" fill="#3c3c3c"/><rect x="798" y="285" width="1" height="1" fill="#3c3c3c"/><rect x="798" y="238" width="1" height="1" fill="#3c3c3c"/><rect x="798" y="192" width="1" height="1" fill="#3c3c3c"/><rect x="798" y="146" width="1" height="1" fill="#3c3c3c"/><rect x="798" y="100" width="1" height="1" fill="#3c3c3c"/><rect x="798" y="54" width="1" height="1" fill="#3c3c3c"/><rect x="798" y="8" width="1" height="1" fill="#3c3c3c"/><rect x="844" y="561" width="1" height="1" fill="#3c3c3c"/><rect x="844" y="515" width="1" height="1" fill="#3c3c3c"/><rect x="844" y="469" width="1" height="1" fill="#3c3c3c"/><rect x="844" y="423" width="1" height="1" fill="#3c3c3c"/><rect x="844" y="377" width="1" height="1" fill="#3c3c3c"/><rect x="844" y="331" width="1" height="1" fill="#3c3c3c"/><rect x="844" y="285" width="1" height="1" fill="#3c3c3c"/><rect x="844" y="238" width="1" height="1" fill="#3c3c3c"/><rect x="844" y="192" width="1" height="1" fill="#3c3c3c"/><rect x="844" y="146" width="1" height="1" fill="#3c3c3c"/><rect x="844" y="100" width="1" height="1" fill="#3c3c3c"/><rect x="844" y="54" width="1" height="1" fill="#3c3c3c"/><rect x="844" y="8" width="1" height="1" fill="#3c3c3c"/><rect x="890" y="561" width="1" height="1" fill="#3c3c3c"/><rect x="890" y="515" width="1" height="1" fill="#3c3c3c"/><rect x="890" y="469" width="1" height="1" fill="#3c3c3c"/><rect x="890" y="423" width="1" height="1" fill="#3c3c3c"/><rect x="890" y="377" width="1" height="1" fill="#3c3c3c"/><rect x="890" y="331" width="1" height="1" fill="#3c3c3c"/><rect x="890" y="285" width="1" height="1" fill="#3c3c3c"/><rect x="890" y="238" width="1" height="1" fill="#3c3c3c"/><rect x="890" y="192" width="1" height="1" fill="#3c3c3c"/><rect x="890" y="146" width="1" height="1" fill="#3c3c3c"/><rect x="890" y="100" width="1" height="1" fill="#3c3c3c"/><rect x="890" y="54" width="1" height="1" fill="#3c3c3c"/><rect x="890" y="8" width="1" height="1" fill="#3c3c3c"/><rect x="936" y="561" width="1" height="1" fill="#3c3c3c"/><rect x="936" y="515" width="1" height="1" fill="#3c3c3c"/><rect x="936" y="469" width="1" height="1" fill="#3c3c3c"/><rect x="936" y="423" width="1" height="1" fill="#3c3c3c"/><rect x="936" y="377" width="1" height="1" fill="#3c3c3c"/><rect x="936" y="331" width="1" height="1" fill="#3c3c3c"/><rect x="936" y="285" width="1" height="1" fill="#3c3c3c"/><rect x="936" y="238" width="1" height="1" fill="#3c3c3c"/><rect x="936" y="192" width="1" height="1" fill="#3c3c3c"/><rect x="936" y="146" width="1" height="1" fill="#3c3c3c"/><rect x="936" y="100" width="1" height="1" fill="#3c3c3c"/><rect x="936" y="54" width="1" height="1" fill="#3c3c3c"/><rect x="936" y="8" width="1" height="1" fill="#3c3c3c"/><rect x="982" y="561" width="1" height="1" fill="#3c3c3c"/><rect x="982" y="515" width="1" height="1" fill="#3c3c3c"/><rect x="982" y="469" width="1" height="1" fill="#3c3c3c"/><rect x="982" y="423" width="1" height="1" fill="#3c3c3c"/><rect x="982" y="377" width="1" height="1" fill="#3c3c3c"/><rect x="982" y="331" width="1" height="1" fill="#3c3c3c"/><rect x="982" y="285" width="1" height="1" fill="#3c3c3c"/><rect x="982" y="238" width="1" height="1" fill="#3c3c3c"/><rect x="982" y="192" width="1" height="1" fill="#3c3c3c"/><rect x="982" y="146" width="1" height="1" fill="#3c3c3c"/><rect x="982" y="100" width="1" height="1" fill="#3c3c3c"/><rect x="982" y="54" width="1" height="1" fill="#3c3c3c"/><rect x="982" y="8" width="1" height="1" fill="#3c3c3c"/><rect x="1028" y="561" width="1" height="1" fill="#3c3c3c"/><rect x="1028" y="515" width="1" height="1" fill="#3c3c3c"/><rect x="1028" y="469" width="1" height="1" fill="#3c3c3c"/><rect x="1028" y="423" width="1" height="1" fill="#3c3c3c"/><rect x="1028" y="377" width="1" height="1" fill="#3c3c3c"/><rect x="1028" y="331" width="1" height="1" fill="#3c3c3c"/><rect x="1028" y="285" width="1" height="1" fill="#3c3c3c"/><rect x="1028" y="238" width="1" height="1" fill="#3c3c3c"/><rect x="1028" y="192" width="1" height="1" fill="#3c3c3c"/><rect x="1028" y="146" width="1" height="1" fill="#3c3c3c"/><rect x="1028" y="100" width="1" height="1" fill="#3c3c3c"/><rect x="1028" y="54" width="1" height="1" fill="#3c3c3c"/><rect x="1028" y="8" width="1" height="1" fill="#3c3c3c"/><defs><radialGradient id="gl"><stop offset="0" stop-color="#000" stop-opacity="0"/><stop offset="0.7" stop-color="#040505"/><stop offset="0.8" stop-color="#121416"/><stop offset="0.87" stop-color="#1e2124"/><stop offset="0.92" stop-color="#16181a"/><stop offset="0.96" stop-color="#202326"/><stop offset="1" stop-color="#111" stop-opacity="0"/></radialGradient></defs><circle cx="649" cy="310.8" r="39.5" fill="url(#gl)"/><line x1="641.5" y1="0" x2="641.5" y2="570" stroke="#8e6800" stroke-width="1" stroke-dasharray="4.5 1.5"/><line x1="0" y1="308" x2="1042" y2="308" stroke="#765600" stroke-width="1" stroke-dasharray="4.5 1.5"/><path d="M 553.5 469.5 L 414.6 469.5 A 78 78 0 0 1 336.6 391.5 L 336.6 178.5 A 78 78 0 0 1 414.6 100.5 L 627.5 100.5 A 78 78 0 0 1 705.5 178.5 L 705.5 317 L 553.5 469.5" fill="none" stroke="#ffffff" stroke-width="1.45"/><path d="M 543.7463772885852 400.7966210231763 A 73.6 73.6 0 1 1 636.8966210231763 307.6463772885852 L 543.7463772885852 400.7966210231763" fill="none" stroke="#fff" stroke-width="1.45"/><line x1="543.7463772885852" y1="400.7966210231763" x2="553.5" y2="469.5" stroke="#b0b0b0" stroke-width="1"/><line x1="636.8966210231763" y1="307.6463772885852" x2="705.5" y2="317" stroke="#b0b0b0" stroke-width="1"/><line x1="474" y1="331" x2="660" y2="331" stroke="#c20000" stroke-width="2" stroke-dasharray="15.6 6 1.6 6" stroke-dashoffset="2.2"/><line x1="567" y1="238.39999999999998" x2="567" y2="424" stroke="#c20000" stroke-width="2" stroke-dasharray="15.6 6 1.6 6" stroke-dashoffset="2.6"/><line x1="382.5" y1="192.5" x2="636.8966210231763" y2="307.6463772885852" stroke="#009ca0" stroke-width="1.0"/><circle cx="382.5" cy="192.5" r="5.3" fill="none" stroke="#a80000" stroke-width="0.95"/><line x1="377.2" y1="192.5" x2="387.8" y2="192.5" stroke="#b00000" stroke-width="1"/><line x1="382.5" y1="187.2" x2="382.5" y2="197.8" stroke="#b00000" stroke-width="1"/><circle cx="641.8" cy="308" r="5" fill="none" stroke="#c89a20" stroke-width="1"/><rect x="647.1" y="295.4" width="3.7" height="31" fill="#b9b9b9"/><rect x="633.7" y="309.3" width="30.5" height="3.5" fill="#b9b9b9"/><circle cx="649" cy="311" r="2.2" fill="#000" stroke="#b9b9b9" stroke-width="0.8"/><text x="650.1" y="326.6" font-size="13.8" fill="#f4c428" stroke="#f4c428" stroke-width="0.25" font-family="Liberation Sans">Slutt</text></svg>
<div class="b" style="left:72px;top:748px;width:1083px;height:2px;background:#c8c8c8;"></div>
<div class="b" style="left:72px;top:750px;width:1081px;height:20px;background:#ffffff;"></div>
<div class="t" style="left:77.30px;top:751.13px;font-size:13.2px;color:#1414d2;font-style:italic;">Kommando: <span style="font-style:normal">snapend</span></div>
<div class="b" style="left:72px;top:770px;width:1081px;height:1px;background:#c8c8c8;"></div>
<div class="b" style="left:72px;top:771px;width:1081px;height:27px;background:#ffffff;"></div>
<div class="t" style="left:73.30px;top:779.07px;font-size:13.5px;color:#111;">Neste punkt:</div>
<div class="b" style="left:1127px;top:772px;width:26px;height:26px;background:linear-gradient(#f6f6f6,#e4e4e4);border:1px solid #b4b4b4;"></div>
<svg class="b" style="left:1127px;top:772px;" width="26" height="26" viewBox="0 0 26 26"><rect x="6" y="8" width="14" height="10" fill="none" stroke="#111" stroke-width="1"/><rect x="6" y="8" width="14" height="3" fill="#111"/><rect x="17.5" y="9" width="1" height="1" fill="#fff"/></svg>
<div class="b" style="left:1153px;top:114px;width:1px;height:684px;background:#dadada;"></div>
<div class="b" style="left:1154px;top:114px;width:1px;height:684px;background:#c0c0c0;"></div>
<div class="b" style="left:1155px;top:114px;width:300px;height:684px;background:#ffffff;"></div>
<div class="t" style="left:1122.00px;width:400px;text-align:center;top:119.34px;font-size:12px;color:#262626;">Lagliste</div>
<svg class="b" style="left:1155px;top:114px;" width="60" height="20" viewBox="0 0 60 20"><circle cx="9" cy="9.7" r="7" fill="#6b6b6b"/><path d="M6 6.7 L12 12.7 M12 6.7 L6 12.7" stroke="#fff" stroke-width="2"/><circle cx="27" cy="9.7" r="7" fill="#6b6b6b"/><rect x="23.5" y="8.5" width="5.5" height="4.5" fill="none" stroke="#fff" stroke-width="1.1"/><path d="M25 8.5 V6.2 H30.6 V11 H29" fill="none" stroke="#fff" stroke-width="1.1"/></svg>
<div class="b" style="left:1155px;top:136px;width:300px;height:27px;background:linear-gradient(#f7f7f7,#e6e6e6);border:1px solid #b2b2b2;"></div>
<div class="b" style="left:1215px;top:136px;width:2px;height:27px;background:#b8b8b8;"></div>
<div class="b" style="left:1275px;top:136px;width:2px;height:27px;background:#b8b8b8;"></div>
<div class="b" style="left:1335px;top:136px;width:2px;height:27px;background:#b8b8b8;"></div>
<div class="b" style="left:1395px;top:136px;width:2px;height:27px;background:#b8b8b8;"></div>
<div class="b" style="left:1155px;top:162px;width:300px;height:1px;background:#a8a8a8;"></div>
<div class="b" style="left:1454px;top:114px;width:1px;height:684px;background:#d0d0d0;"></div>
<svg class="b" style="left:0px;top:0px;" width="1500" height="844" viewBox="0 0 1500 844"><g transform="translate(1185 148.6) scale(0.95)"><path d="M-7.6 0.4 Q-4.5 -5.8 0 -5.6 Q4.5 -5.8 7.6 0.4 Q4.5 5.8 0 5.5 Q-4.5 5.8 -7.6 0.4 Z" fill="#000"/><ellipse cx="0" cy="1" rx="5" ry="3.2" fill="#f0f0f0"/><circle cx="0" cy="-0.2" r="2.7" fill="#000"/><circle cx="-0.9" cy="-1" r="0.6" fill="#f0f0f0"/></g><g transform="translate(1245 148.6) scale(0.95)"><path d="M-7.6 0.4 Q-4.5 -5.8 0 -5.6 Q4.5 -5.8 7.6 0.4 Q4.5 5.8 0 5.5 Q-4.5 5.8 -7.6 0.4 Z" fill="#b4b4b4"/><ellipse cx="0" cy="1" rx="5" ry="3.2" fill="#eeeeee"/><circle cx="0" cy="-0.2" r="2.7" fill="#b4b4b4"/><circle cx="-0.9" cy="-1" r="0.6" fill="#eeeeee"/></g><path d="M1305 142 V156 M1298 149 H1312" stroke="#e00000" stroke-width="3.2"/><path d="M1357.5 149 H1372" stroke="#e00000" stroke-width="3.2"/><g transform="translate(1424 149) scale(1.05) rotate(-45)"><rect x="-7" y="-1.6" width="13" height="3.2" fill="#dcb46c" stroke="#9a7a40" stroke-width="0.5"/><rect x="5.5" y="-1.6" width="2.6" height="3.2" fill="#e87080"/><path d="M-7 -1.6 L-10 0 L-7 1.6 Z" fill="#c8a060"/></g><rect x="1156" y="203" width="298" height="20" fill="#0b4cda"/><rect x="1181.5" y="169.7" width="15" height="8" fill="#ffffff" stroke="#222" stroke-width="1"/><text x="1203.3" y="177.3" font-size="13.3" fill="#111" font-family="Liberation Sans">0</text><g transform="translate(1422.8 172.4) scale(1.0)"><path d="M-7.6 0.4 Q-4.5 -5.8 0 -5.6 Q4.5 -5.8 7.6 0.4 Q4.5 5.8 0 5.5 Q-4.5 5.8 -7.6 0.4 Z" fill="#000"/><ellipse cx="0" cy="1" rx="5" ry="3.2" fill="#fff"/><circle cx="0" cy="-0.2" r="2.7" fill="#000"/><circle cx="-0.9" cy="-1" r="0.6" fill="#fff"/></g><g transform="translate(1445 172.4)"><path d="M-3.7 0.5 V-2.4 A3.7 3.7 0 0 1 3.7 -2.4 V0.5" fill="none" stroke="#c4c4c4" stroke-width="1.4"/><rect x="-4.8" y="0" width="9.6" height="7.2" fill="#bdbdbd"/></g><rect x="1181.5" y="189.5" width="15" height="8" fill="#000000" stroke="#222" stroke-width="1"/><text x="1203.3" y="197.1" font-size="13.3" fill="#111" font-family="Liberation Sans">Brudd</text><g transform="translate(1422.8 192.2) scale(1.0)"><path d="M-7.6 0.4 Q-4.5 -5.8 0 -5.6 Q4.5 -5.8 7.6 0.4 Q4.5 5.8 0 5.5 Q-4.5 5.8 -7.6 0.4 Z" fill="#000"/><ellipse cx="0" cy="1" rx="5" ry="3.2" fill="#fff"/><circle cx="0" cy="-0.2" r="2.7" fill="#000"/><circle cx="-0.9" cy="-1" r="0.6" fill="#fff"/></g><g transform="translate(1445 192.2)"><path d="M-3.7 0.5 V-2.4 A3.7 3.7 0 0 1 3.7 -2.4 V0.5" fill="none" stroke="#c4c4c4" stroke-width="1.4"/><rect x="-4.8" y="0" width="9.6" height="7.2" fill="#bdbdbd"/></g><rect x="1181.5" y="209.3" width="15" height="8" fill="#3ae8f8" stroke="#222" stroke-width="1"/><text x="1203.3" y="216.9" font-size="13.3" fill="#fff" font-family="Liberation Sans">Konstruksjon</text><g transform="translate(1422.8 212) scale(1.0)"><path d="M-7.6 0.4 Q-4.5 -5.8 0 -5.6 Q4.5 -5.8 7.6 0.4 Q4.5 5.8 0 5.5 Q-4.5 5.8 -7.6 0.4 Z" fill="#2a3a58"/><ellipse cx="0" cy="1" rx="5" ry="3.2" fill="#0b4cda"/><circle cx="0" cy="-0.2" r="2.7" fill="#2a3a58"/><circle cx="-0.9" cy="-1" r="0.6" fill="#0b4cda"/></g><g transform="translate(1445 212)"><path d="M-3.7 0.5 V-2.4 A3.7 3.7 0 0 1 3.7 -2.4 V0.5" fill="none" stroke="#dde3ef" stroke-width="1.4"/><rect x="-4.8" y="0" width="9.6" height="7.2" fill="#b4bed6"/></g><rect x="1181.5" y="229.2" width="15" height="8" fill="#ff0000" stroke="#222" stroke-width="1"/><text x="1203.3" y="236.8" font-size="13.3" fill="#111" font-family="Liberation Sans">Senter</text><g transform="translate(1422.8 231.9) scale(1.0)"><path d="M-7.6 0.4 Q-4.5 -5.8 0 -5.6 Q4.5 -5.8 7.6 0.4 Q4.5 5.8 0 5.5 Q-4.5 5.8 -7.6 0.4 Z" fill="#000"/><ellipse cx="0" cy="1" rx="5" ry="3.2" fill="#fff"/><circle cx="0" cy="-0.2" r="2.7" fill="#000"/><circle cx="-0.9" cy="-1" r="0.6" fill="#fff"/></g><g transform="translate(1445 231.9)"><path d="M-3.7 0.5 V-2.4 A3.7 3.7 0 0 1 3.7 -2.4 V0.5" fill="none" stroke="#c4c4c4" stroke-width="1.4"/><rect x="-4.8" y="0" width="9.6" height="7.2" fill="#bdbdbd"/></g><rect x="1181.5" y="249.1" width="15" height="8" fill="#000000" stroke="#222" stroke-width="1"/><text x="1203.3" y="256.7" font-size="13.3" fill="#111" font-family="Liberation Sans">Synlig</text><g transform="translate(1422.8 251.8) scale(1.0)"><path d="M-7.6 0.4 Q-4.5 -5.8 0 -5.6 Q4.5 -5.8 7.6 0.4 Q4.5 5.8 0 5.5 Q-4.5 5.8 -7.6 0.4 Z" fill="#000"/><ellipse cx="0" cy="1" rx="5" ry="3.2" fill="#fff"/><circle cx="0" cy="-0.2" r="2.7" fill="#000"/><circle cx="-0.9" cy="-1" r="0.6" fill="#fff"/></g><g transform="translate(1445 251.8)"><path d="M-3.7 0.5 V-2.4 A3.7 3.7 0 0 1 3.7 -2.4 V0.5" fill="none" stroke="#c4c4c4" stroke-width="1.4"/><rect x="-4.8" y="0" width="9.6" height="7.2" fill="#bdbdbd"/></g><g transform="translate(1401 212) scale(0.95) rotate(-45)"><rect x="-7" y="-1.6" width="13" height="3.2" fill="#dcb46c" stroke="#9a7a40" stroke-width="0.5"/><rect x="5.5" y="-1.6" width="2.6" height="3.2" fill="#e87080"/><path d="M-7 -1.6 L-10 0 L-7 1.6 Z" fill="#c8a060"/></g></svg>
<div class="b" style="left:1455px;top:114px;width:45px;height:685px;background:linear-gradient(90deg,#efefef,#d9d9d9 45%,#c9c9c9 95%,#bcbcbc 95%);"></div>
<svg class="b" style="left:0px;top:0px;" width="1500" height="844" viewBox="0 0 1500 844"><rect x="1462.0" y="121.5" width="2" height="2" fill="#a8a8a8"/><rect x="1467.2" y="121.5" width="2" height="2" fill="#a8a8a8"/><rect x="1472.4" y="121.5" width="2" height="2" fill="#a8a8a8"/><rect x="1477.6" y="121.5" width="2" height="2" fill="#a8a8a8"/><rect x="1482.8" y="121.5" width="2" height="2" fill="#a8a8a8"/><rect x="1488.0" y="121.5" width="2" height="2" fill="#a8a8a8"/><rect x="1458" y="267.5" width="1" height="1" fill="#888"/><rect x="1461" y="267.5" width="1" height="1" fill="#888"/><rect x="1464" y="267.5" width="1" height="1" fill="#888"/><rect x="1467" y="267.5" width="1" height="1" fill="#888"/><rect x="1470" y="267.5" width="1" height="1" fill="#888"/><rect x="1473" y="267.5" width="1" height="1" fill="#888"/><rect x="1476" y="267.5" width="1" height="1" fill="#888"/><rect x="1479" y="267.5" width="1" height="1" fill="#888"/><rect x="1482" y="267.5" width="1" height="1" fill="#888"/><rect x="1485" y="267.5" width="1" height="1" fill="#888"/><rect x="1488" y="267.5" width="1" height="1" fill="#888"/><rect x="1491" y="267.5" width="1" height="1" fill="#888"/><rect x="1494" y="267.5" width="1" height="1" fill="#888"/><rect x="1497" y="267.5" width="1" height="1" fill="#888"/><rect x="1458" y="415.5" width="1" height="1" fill="#888"/><rect x="1461" y="415.5" width="1" height="1" fill="#888"/><rect x="1464" y="415.5" width="1" height="1" fill="#888"/><rect x="1467" y="415.5" width="1" height="1" fill="#888"/><rect x="1470" y="415.5" width="1" height="1" fill="#888"/><rect x="1473" y="415.5" width="1" height="1" fill="#888"/><rect x="1476" y="415.5" width="1" height="1" fill="#888"/><rect x="1479" y="415.5" width="1" height="1" fill="#888"/><rect x="1482" y="415.5" width="1" height="1" fill="#888"/><rect x="1485" y="415.5" width="1" height="1" fill="#888"/><rect x="1488" y="415.5" width="1" height="1" fill="#888"/><rect x="1491" y="415.5" width="1" height="1" fill="#888"/><rect x="1494" y="415.5" width="1" height="1" fill="#888"/><rect x="1497" y="415.5" width="1" height="1" fill="#888"/><rect x="1456" y="126" width="42" height="42" rx="6" fill="#b9b9b9"/><rect x="1456" y="423" width="42" height="42.5" rx="6" fill="#b9b9b9"/><g transform="translate(1463 133)"><rect x="0.5" y="0.5" width="27" height="27" fill="#fff" stroke="#111" stroke-width="1"/><rect x="0.5" y="0.5" width="27" height="4.5" fill="#000"/><rect x="2" y="1.5" width="2.5" height="2.5" fill="#fff"/><path d="M7 10 L12 8 L12 22 L7 24 Z" fill="#888" stroke="#444" stroke-width="0.6"/><path d="M10 9 L20 6 L20 19 L10 22 Z" fill="#eee" stroke="#444" stroke-width="0.7"/><path d="M13 18 L17 10 L18 17 Z" fill="none" stroke="#e03030" stroke-width="0.8"/></g><g transform="translate(1463 180.5)"><rect x="0.5" y="0.5" width="27" height="27" fill="#fff" stroke="#111" stroke-width="1"/><rect x="0.5" y="0.5" width="27" height="4.5" fill="#000"/><rect x="2" y="1.5" width="2.5" height="2.5" fill="#fff"/><rect x="5" y="9" width="12" height="9" fill="#f4e6b0" stroke="#555" stroke-width="0.8"/><circle cx="17" cy="17.5" r="5" fill="#f4e6b0" stroke="#555" stroke-width="0.8"/></g><g transform="translate(1463 226)"><rect x="0.5" y="0.5" width="27" height="27" fill="#fff" stroke="#111" stroke-width="1"/><rect x="0.5" y="0.5" width="27" height="4.5" fill="#000"/><rect x="2" y="1.5" width="2.5" height="2.5" fill="#fff"/><rect x="5" y="11" width="18" height="11" rx="3" fill="#f0f0f0" stroke="#b8c8e0" stroke-width="0.8"/></g><g transform="translate(1463 281.5)"><rect x="0.5" y="0.5" width="27" height="27" fill="#fff" stroke="#111" stroke-width="1"/><rect x="0.5" y="0.5" width="27" height="4.5" fill="#000"/><rect x="2" y="1.5" width="2.5" height="2.5" fill="#fff"/><rect x="4" y="9" width="4" height="3" fill="#111"/><rect x="4" y="15" width="4" height="3" fill="#111"/><rect x="4" y="21" width="4" height="3" fill="#111"/><rect x="11" y="9" width="12" height="3" fill="none" stroke="#111" stroke-width="0.8"/><rect x="11" y="15" width="12" height="3" fill="none" stroke="#111" stroke-width="0.8"/><rect x="11" y="21" width="12" height="3" fill="none" stroke="#111" stroke-width="0.8"/></g><g transform="translate(1463 327.5)"><rect x="0.5" y="0.5" width="27" height="27" fill="#fff" stroke="#111" stroke-width="1"/><rect x="0.5" y="0.5" width="27" height="4.5" fill="#000"/><rect x="2" y="1.5" width="2.5" height="2.5" fill="#fff"/><path d="M6 9 H22 L15 16 V24 L13 23 V16 Z" fill="#aaa" stroke="#555" stroke-width="0.8"/></g><g transform="translate(1463 373.5)"><rect x="0.5" y="0.5" width="27" height="27" fill="#fff" stroke="#111" stroke-width="1"/><rect x="0.5" y="0.5" width="27" height="4.5" fill="#000"/><rect x="2" y="1.5" width="2.5" height="2.5" fill="#fff"/><path d="M6 8 L12 12 H20 V20 H12 L6 24 Z" fill="#eee" stroke="#444" stroke-width="0.8"/><path d="M3 16 H25" stroke="#e88" stroke-width="0.8"/></g><g transform="translate(1463 430)"><rect x="0.5" y="0.5" width="27" height="27" fill="#fff" stroke="#111" stroke-width="1"/><rect x="0.5" y="0.5" width="27" height="4.5" fill="#000"/><rect x="2" y="1.5" width="2.5" height="2.5" fill="#fff"/><path d="M4 9 H20 M4 12 H18 M4 15 H20 M4 18 H19" stroke="#888" stroke-width="0.7"/><rect x="2.5" y="21.5" width="23" height="4" fill="none" stroke="#444" stroke-width="0.6"/></g><g transform="translate(1463 476.5)"><rect x="0.5" y="0.5" width="27" height="27" fill="#fff" stroke="#111" stroke-width="1"/><rect x="0.5" y="0.5" width="27" height="4.5" fill="#000"/><rect x="2" y="1.5" width="2.5" height="2.5" fill="#fff"/><rect x="7" y="8" width="14" height="17" rx="1" fill="#c89048" stroke="#7a5520"/><rect x="9" y="10" width="10" height="12" fill="#f8f8f8"/><rect x="11" y="7" width="6" height="3" fill="#999"/></g></svg>
<div class="b" style="left:0px;top:113px;width:71px;height:685px;background:linear-gradient(90deg,#ececec,#dedede 70%,#c8c8c8);"></div>
<div class="b" style="left:71px;top:113px;width:1px;height:685px;background:#b8b8b8;"></div>
<svg class="b" style="left:0px;top:0px;" width="80" height="844" viewBox="0 0 80 844"><rect x="7" y="122" width="2" height="2" fill="#a4a4a4"/><rect x="13" y="122" width="2" height="2" fill="#a4a4a4"/><rect x="19" y="122" width="2" height="2" fill="#a4a4a4"/><rect x="25" y="122" width="2" height="2" fill="#a4a4a4"/><rect x="31" y="122" width="2" height="2" fill="#a4a4a4"/><rect x="37" y="122" width="2" height="2" fill="#a4a4a4"/><rect x="43" y="122" width="2" height="2" fill="#a4a4a4"/><rect x="49" y="122" width="2" height="2" fill="#a4a4a4"/><rect x="55" y="122" width="2" height="2" fill="#a4a4a4"/><rect x="61" y="122" width="2" height="2" fill="#a4a4a4"/></svg>
<div class="b" style="left:1px;top:126px;width:70px;height:26px;background:linear-gradient(#e4e4e4,#f3f3f3);border:1px solid #8c8c8c;box-shadow:inset 0 1px #f8f8f8;"></div>
<svg class="b" style="left:0px;top:0px;" width="80" height="160" viewBox="0 0 80 160"><polygon points="32,138.9 40,134.6 40,143.2" fill="#000"/></svg>
<div class="b" style="left:1px;top:162px;width:35px;height:35px;background:linear-gradient(#e4e4e4,#f3f3f3);border:1px solid #8c8c8c;box-shadow:inset 0 1px #f8f8f8;"></div>
<div class="b" style="left:36px;top:162px;width:35px;height:35px;background:linear-gradient(#e4e4e4,#f3f3f3);border:1px solid #8c8c8c;box-shadow:inset 0 1px #f8f8f8;"></div>
<div class="b" style="left:1px;top:205px;width:35px;height:35px;background:#bdbdbd;border-radius:5px;border:1px solid #a8a8a8;"></div>
<div class="b" style="left:36px;top:205px;width:35px;height:35px;background:linear-gradient(#e4e4e4,#f3f3f3);border:1px solid #8c8c8c;box-shadow:inset 0 1px #f8f8f8;"></div>
<div class="b" style="left:1px;top:240px;width:35px;height:35px;background:linear-gradient(#e4e4e4,#f3f3f3);border:1px solid #8c8c8c;box-shadow:inset 0 1px #f8f8f8;"></div>
<div class="b" style="left:36px;top:240px;width:35px;height:35px;background:linear-gradient(#e4e4e4,#f3f3f3);border:1px solid #8c8c8c;box-shadow:inset 0 1px #f8f8f8;"></div>
<div class="b" style="left:1px;top:275px;width:35px;height:35px;background:linear-gradient(#e4e4e4,#f3f3f3);border:1px solid #8c8c8c;box-shadow:inset 0 1px #f8f8f8;"></div>
<div class="b" style="left:36px;top:275px;width:35px;height:35px;background:linear-gradient(#e4e4e4,#f3f3f3);border:1px solid #8c8c8c;box-shadow:inset 0 1px #f8f8f8;"></div>
<div class="b" style="left:1px;top:318px;width:35px;height:35px;background:linear-gradient(#e4e4e4,#f3f3f3);border:1px solid #8c8c8c;box-shadow:inset 0 1px #f8f8f8;"></div>
<div class="b" style="left:36px;top:318px;width:35px;height:35px;background:linear-gradient(#e4e4e4,#f3f3f3);border:1px solid #8c8c8c;box-shadow:inset 0 1px #f8f8f8;"></div>
<div class="b" style="left:1px;top:361px;width:35px;height:35px;background:linear-gradient(#e4e4e4,#f3f3f3);border:1px solid #8c8c8c;box-shadow:inset 0 1px #f8f8f8;"></div>
<div class="b" style="left:36px;top:361px;width:35px;height:35px;background:linear-gradient(#e4e4e4,#f3f3f3);border:1px solid #8c8c8c;box-shadow:inset 0 1px #f8f8f8;"></div>
<div class="b" style="left:1px;top:404px;width:35px;height:35px;background:linear-gradient(#e4e4e4,#f3f3f3);border:1px solid #8c8c8c;box-shadow:inset 0 1px #f8f8f8;"></div>
<div class="b" style="left:36px;top:404px;width:35px;height:35px;background:linear-gradient(#e4e4e4,#f3f3f3);border:1px solid #8c8c8c;box-shadow:inset 0 1px #f8f8f8;"></div>
<div class="b" style="left:1px;top:447px;width:35px;height:35px;background:linear-gradient(#e4e4e4,#f3f3f3);border:1px solid #8c8c8c;box-shadow:inset 0 1px #f8f8f8;"></div>
<div class="t" style="left:-181.80px;width:400px;text-align:center;top:458.29px;font-size:12.3px;color:#111;">Auto</div>
<div class="b" style="left:1px;top:490px;width:35px;height:35px;background:linear-gradient(#e4e4e4,#f3f3f3);border:1px solid #8c8c8c;box-shadow:inset 0 1px #f8f8f8;"></div>
<div class="b" style="left:36px;top:490px;width:35px;height:35px;background:linear-gradient(#e4e4e4,#f3f3f3);border:1px solid #8c8c8c;box-shadow:inset 0 1px #f8f8f8;"></div>
<div class="b" style="left:1px;top:533px;width:35px;height:35px;background:linear-gradient(#e4e4e4,#f3f3f3);border:1px solid #8c8c8c;box-shadow:inset 0 1px #f8f8f8;"></div>
<div class="b" style="left:36px;top:533px;width:35px;height:35px;background:linear-gradient(#e4e4e4,#f3f3f3);border:1px solid #8c8c8c;box-shadow:inset 0 1px #f8f8f8;"></div>
<div class="b" style="left:1px;top:576px;width:35px;height:35px;background:linear-gradient(#e4e4e4,#f3f3f3);border:1px solid #8c8c8c;box-shadow:inset 0 1px #f8f8f8;"></div>
<div class="b" style="left:1px;top:619px;width:35px;height:35px;background:#bdbdbd;border-radius:5px;border:1px solid #a8a8a8;"></div>
<div class="b" style="left:36px;top:619px;width:35px;height:35px;background:linear-gradient(#e4e4e4,#f3f3f3);border:1px solid #8c8c8c;box-shadow:inset 0 1px #f8f8f8;"></div>
<div class="b" style="left:1px;top:654px;width:35px;height:35px;background:linear-gradient(#e4e4e4,#f3f3f3);border:1px solid #8c8c8c;box-shadow:inset 0 1px #f8f8f8;"></div>
<div class="b" style="left:36px;top:654px;width:35px;height:35px;background:linear-gradient(#e4e4e4,#f3f3f3);border:1px solid #8c8c8c;box-shadow:inset 0 1px #f8f8f8;"></div>
<div class="b" style="left:1px;top:689px;width:35px;height:35px;background:linear-gradient(#e4e4e4,#f3f3f3);border:1px solid #8c8c8c;box-shadow:inset 0 1px #f8f8f8;"></div>
<div class="b" style="left:1px;top:732px;width:35px;height:35px;background:linear-gradient(#e4e4e4,#f3f3f3);border:1px solid #8c8c8c;box-shadow:inset 0 1px #f8f8f8;"></div>
<div class="b" style="left:36px;top:732px;width:35px;height:35px;background:linear-gradient(#e4e4e4,#f3f3f3);border:1px solid #8c8c8c;box-shadow:inset 0 1px #f8f8f8;"></div>
<div class="b" style="left:1px;top:775px;width:35px;height:30px;background:linear-gradient(#e4e4e4,#f3f3f3);border:1px solid #8c8c8c;box-shadow:inset 0 1px #f8f8f8;"></div>
<div class="b" style="left:0px;top:798px;width:1500px;height:46px;background:#dcdcdc;"></div>
<div class="t" style="left:2.00px;top:807.58px;font-size:10.3px;color:#111;">86.1389,75.0076</div>
<div class="t" style="left:2.00px;top:828.48px;font-size:10.3px;color:#111;">@56.1389,-24.9924</div>
<div class="b" style="left:254px;top:802px;width:1px;height:39px;background:#9a9a9a;"></div>
<div class="t" style="left:256.00px;top:807.58px;font-size:10.3px;color:#111;">114.2193&lt;41°</div>
<div class="t" style="left:256.00px;top:828.48px;font-size:10.3px;color:#111;">@61.4507&lt;336°</div>
<div class="b" style="left:506.5px;top:819px;width:5px;height:5px;background:#b8b8b8;border-radius:50%;"></div>
<div class="t" style="left:643.50px;top:818.08px;font-size:10.3px;color:#111;">Neste punkt</div>
<div class="t" style="left:753.50px;top:818.08px;font-size:10.3px;color:#111;">Ferdig</div>
<svg class="b" style="left:716px;top:806px;" width="22" height="30" viewBox="0 0 22 30"><rect x="1.5" y="1" width="18" height="27" rx="9" fill="#fff" stroke="#333" stroke-width="0.9"/><path d="M1.5 13 H19.5 M10.5 1 V13" stroke="#333" stroke-width="0.9"/><rect x="8.5" y="4" width="4" height="7" rx="2" fill="#fff" stroke="#333" stroke-width="0.9"/></svg>
<div class="b" style="left:939.5px;top:819px;width:5px;height:5px;background:#b8b8b8;border-radius:50%;"></div>
<div class="t" style="left:948.80px;top:818.08px;font-size:10.3px;color:#111;">Ingen enheter valgt.</div>
<div class="b" style="left:1269.5px;top:819px;width:5px;height:5px;background:#b8b8b8;border-radius:50%;"></div>
<svg class="b" style="left:0px;top:0px;" width="1500" height="120" viewBox="0 0 1500 120"><rect x="804" y="31" width="42.5" height="42.5" rx="5" fill="#b9b9b9"/><rect x="861" y="31" width="43" height="42.5" rx="5" fill="#b9b9b9"/><rect x="76" y="76" width="43" height="36.5" rx="5" fill="#b5b5b5"/><path d="M27.5 42 L27.5 59 L31.5 55.5 L35 62.5 L38 61 L34.7 54.2 L39.5 54 Z" fill="#fff" stroke="#333" stroke-width="1.1" stroke-linejoin="round"/><rect x="100.5" y="38.5" width="24.5" height="27" rx="1.5" fill="#f2f2f2" stroke="#999" stroke-width="1"/><defs><radialGradient id="sun"><stop offset="0" stop-color="#ffffd0"/><stop offset="0.5" stop-color="#f0e020"/><stop offset="1" stop-color="#f0e040" stop-opacity="0"/></radialGradient></defs><circle cx="120.5" cy="43.5" r="7" fill="url(#sun)"/><path d="M143.5 40.5 L150 40.5 L149.5 62 L145.5 63 Z" fill="#9a9a9a" stroke="#666" stroke-width="0.6"/><path d="M150.5 38.5 L172 38.5 L169.5 50 L147.5 62 Z" fill="#f4f4f4" stroke="#777" stroke-width="0.7"/><path d="M153 41.5 H169 M152.5 44 H168.5 M152 46.5 H168" stroke="#b8b8b8" stroke-width="1.2"/><defs><linearGradient id="fold" x1="0" y1="0" x2="0" y2="1"><stop offset="0" stop-color="#8ab0e0"/><stop offset="1" stop-color="#5a8fd0"/></linearGradient></defs><path d="M151.2 49.6 L175 49.3 L170.2 63.6 L146.3 63.8 Z" fill="url(#fold)" stroke="#3c6cb0" stroke-width="0.7"/><defs><linearGradient id="fl1" x1="0" y1="0" x2="1" y2="0"><stop offset="0" stop-color="#8ab8ff"/><stop offset="0.5" stop-color="#4a88f4"/><stop offset="1" stop-color="#3a78f0"/></linearGradient></defs><g transform="translate(202 39)"><rect x="0.5" y="0.5" width="24" height="24.6" rx="2.5" fill="url(#fl1)" stroke="#2a2aa0" stroke-width="1"/><rect x="3.4" y="1.2" width="18.2" height="11.5" fill="#f2f4fc"/><rect x="5.4" y="14.6" width="12" height="10" fill="#e4e4ec"/><rect x="7.2" y="17.1" width="2.4" height="4.6" rx="1" fill="#1a3ae0"/></g><defs><linearGradient id="fl2" x1="0" y1="0" x2="1" y2="0"><stop offset="0" stop-color="#8ab8ff"/><stop offset="0.5" stop-color="#4a88f4"/><stop offset="1" stop-color="#3a78f0"/></linearGradient></defs><g transform="translate(248 39)"><rect x="0.5" y="0.5" width="24" height="24.6" rx="2.5" fill="url(#fl2)" stroke="#2a2aa0" stroke-width="1"/><rect x="3.4" y="1.2" width="18.2" height="11.5" fill="#f2f4fc"/><rect x="5.4" y="14.6" width="12" height="10" fill="#e4e4ec"/><rect x="7.2" y="17.1" width="2.4" height="4.6" rx="1" fill="#1a3ae0"/></g><g transform="translate(267.3 48.2) rotate(-45)"><rect x="-8" y="-2.4" width="18" height="4.8" fill="#f8b818" stroke="#b02a10" stroke-width="0.8"/><rect x="8.5" y="-2.4" width="3" height="4.8" rx="1" fill="#f06040" stroke="#b02a10" stroke-width="0.8"/><path d="M-8 -2.4 L-12 0 L-8 2.4 Z" fill="#f4e8d0" stroke="#b02a10" stroke-width="0.6"/><path d="M-12 0 L-10.6 -0.8 L-10.6 0.8 Z" fill="#222"/></g><g stroke="#000" stroke-width="5.4" stroke-linecap="round"><path d="M317 51 L317 41.7 M317 51 L310.7 44.7 M317 51 L323.3 44.7 M317 51 L307.5 49.5 M317 51 L326.5 49.5"/></g><g stroke="#f6a828" stroke-width="3.2" stroke-linecap="round"><path d="M317 51 L317 41.7 M317 51 L310.7 44.7 M317 51 L323.3 44.7 M317 51 L307.5 49.5 M317 51 L326.5 49.5"/></g><rect x="305.3" y="51" width="23.7" height="12.7" rx="3" fill="#000"/><rect x="307" y="50" width="20" height="1.4" fill="#f6a828"/><text x="317.2" y="62.6" font-size="12.5" font-weight="bold" fill="#fff" text-anchor="middle" font-family="Liberation Sans" transform="translate(317.2 0) scale(0.78 1) translate(-317.2 0)" textLength="24">SVG</text><rect x="363.3" y="38.2" width="19.4" height="13" rx="1" fill="#f0f0f0" stroke="#c8c8c8" stroke-width="0.8"/><path d="M371 42 H380 M371 45 H380" stroke="#c8c8c8" stroke-width="1"/><defs><linearGradient id="prn" x1="0" y1="0" x2="0" y2="1"><stop offset="0" stop-color="#f4f4f4"/><stop offset="1" stop-color="#c8c8c8"/></linearGradient></defs><rect x="359.3" y="49.5" width="27.4" height="13.8" rx="3" fill="url(#prn)" stroke="#9a9a9a" stroke-width="0.8"/><path d="M362 55 H384" stroke="#b0b0b0" stroke-width="0.8"/><line x1="372" y1="51" x2="380.5" y2="57.5" stroke="#888" stroke-width="3.2" stroke-linecap="round"/><defs><radialGradient id="lns" cx="0.4" cy="0.35"><stop offset="0" stop-color="#f0f6ff"/><stop offset="1" stop-color="#b8d0ec"/></radialGradient></defs><circle cx="368.4" cy="47" r="6.2" fill="url(#lns)" stroke="#5a8ad0" stroke-width="1.2"/><circle cx="368.4" cy="47" r="7.3" fill="none" stroke="#e8e8e8" stroke-width="1"/><defs><linearGradient id="ga1" x1="0" y1="0" x2="1" y2="0"><stop offset="0" stop-color="#90d470"/><stop offset="1" stop-color="#2aa040"/></linearGradient></defs><g transform="translate(413.5 43.3) scale(1.0 1.0)"><path d="M0 0 L4 4.3 C7.5 -0.3 12.5 -3.5 17.5 -3.5 C23.5 -3.5 28.5 1.7 28.5 7.7 C28.5 14.7 21.5 19.7 12.6 20.5 C19.5 17.5 24 12.5 24 7.7 C24 3.7 21 0.1 17.5 0.1 C14.5 0.1 11 2.7 8.3 8.9 L13.3 14.3 L0 14.3 Z" fill="url(#ga1)" stroke="#138a30" stroke-width="0.90" stroke-linejoin="round"/></g><defs><linearGradient id="ga2" x1="0" y1="0" x2="1" y2="0"><stop offset="0" stop-color="#bfe0b0"/><stop offset="1" stop-color="#88c898"/></linearGradient></defs><g transform="translate(488 43.3) scale(-1.0 1.0)"><path d="M0 0 L4 4.3 C7.5 -0.3 12.5 -3.5 17.5 -3.5 C23.5 -3.5 28.5 1.7 28.5 7.7 C28.5 14.7 21.5 19.7 12.6 20.5 C19.5 17.5 24 12.5 24 7.7 C24 3.7 21 0.1 17.5 0.1 C14.5 0.1 11 2.7 8.3 8.9 L13.3 14.3 L0 14.3 Z" fill="url(#ga2)" stroke="#70b080" stroke-width="0.90" stroke-linejoin="round"/></g><ellipse cx="531" cy="64" rx="11" ry="1.6" fill="#d0d0d0" opacity="0.8"/><g transform="translate(529.5 50.5) rotate(-45)"><rect x="-13" y="-4.6" width="26" height="9.2" rx="1" fill="#e88888" stroke="#d06a6a" stroke-width="0.7"/><rect x="-13" y="-4.6" width="6.5" height="9.2" fill="#f8f8f8" stroke="#c8c8c8" stroke-width="0.7"/><rect x="-6.5" y="-1.2" width="19" height="2.6" fill="#f4f4f4"/></g><path d="M584.5 53 L587.5 37.2 L589.8 37.6 L588.2 50 Z" fill="#f8f8f8" stroke="#8a8a8a" stroke-width="0.7"/><path d="M587 51.5 L599.5 43.6 L600.3 45.6 L589 53.5 Z" fill="#f8f8f8" stroke="#8a8a8a" stroke-width="0.7"/><ellipse cx="579" cy="54.2" rx="5.6" ry="3.2" transform="rotate(-20 579 54.2)" fill="none" stroke="#e07878" stroke-width="2"/><ellipse cx="588.8" cy="60.6" rx="2.8" ry="5.2" transform="rotate(-10 588.8 60.6)" fill="none" stroke="#e07878" stroke-width="2"/><path d="M572 63.8 H578.5 M575.3 60.6 V67" stroke="#333" stroke-width="1"/><path d="M617.8 36.8 H637.5 L638 60.5 H617.8 Z" fill="#f6f6f6" stroke="#d0d0d0" stroke-width="0.8"/><path d="M620 46 H627 M620 49 H627 M620 52 H627" stroke="#c8c8c8" stroke-width="0.8"/><path d="M625.5 42.5 H646.5 V63 L643 67 H625.5 Z" fill="#f8f8f8" stroke="#c0c0c0" stroke-width="0.8"/><path d="M643 67 V63 H646.5" fill="#ddd" stroke="#aaa" stroke-width="0.6"/><path d="M629 49 H643 M629 52 H643 M629 55 H643 M629 58 H640" stroke="#c4c4c4" stroke-width="0.8"/><path d="M617.5 62.5 H624.5 M621 59 V66" stroke="#333" stroke-width="1"/><rect x="664.8" y="39.3" width="26.4" height="27" rx="2" fill="#c8903a" stroke="#9a6a20" stroke-width="0.9"/><rect x="667.8" y="41.3" width="20.5" height="22.5" fill="#f6f6f6"/><path d="M685 63.8 L688.3 60.5 V63.8 Z" fill="#9a9a9a"/><rect x="672" y="36.3" width="11.5" height="5.5" rx="1.5" fill="#a8a8a0" stroke="#70706a" stroke-width="0.6"/><path d="M671 47 H684.5 M671 50 H684.5 M671 53 H684.5 M671 56 H682 M671 59 H679" stroke="#c0c0c0" stroke-width="0.8"/><line x1="722.2" y1="62.4" x2="744" y2="62.4" stroke="#f00000" stroke-width="1"/><g transform="translate(733.5 51.8) rotate(-44)"><rect x="-8" y="-2.9" width="19.5" height="5.8" rx="0.8" fill="#e02a20" stroke="#7a2010" stroke-width="0.8"/><rect x="8" y="-2.9" width="1.8" height="5.8" fill="#d8d8d8"/><path d="M-8 -2.9 L-13 0 L-8 2.9 Z" fill="#f0d4b0" stroke="#7a5030" stroke-width="0.6"/><path d="M-13 0 L-11.2 -1 L-11.2 1 Z" fill="#222"/></g><rect x="764.9" y="41.9" width="28.4" height="21" fill="#000088" stroke="#111" stroke-width="1"/><path d="M768.3 59.8 L790.2 45" stroke="#fff" stroke-width="1.1" stroke-dasharray="3 1"/><path d="M790.2 45.5 V59.8 H768.5" fill="none" stroke="#d8d8ff" stroke-width="1.1" stroke-dasharray="2.2 1.6"/><circle cx="824.9" cy="51.5" r="13.1" fill="none" stroke="#000" stroke-width="1.9"/><line x1="811.2" y1="65.4" x2="838.9" y2="38.1" stroke="#1a1ae8" stroke-width="1.2"/><rect x="869" y="39" width="2" height="2" fill="#222"/><rect x="869" y="47" width="2" height="2" fill="#222"/><rect x="869" y="55" width="2" height="2" fill="#222"/><rect x="869" y="63" width="2" height="2" fill="#222"/><rect x="877" y="39" width="2" height="2" fill="#222"/><rect x="877" y="47" width="2" height="2" fill="#222"/><rect x="877" y="55" width="2" height="2" fill="#222"/><rect x="877" y="63" width="2" height="2" fill="#222"/><rect x="885" y="39" width="2" height="2" fill="#222"/><rect x="885" y="47" width="2" height="2" fill="#222"/><rect x="885" y="55" width="2" height="2" fill="#222"/><rect x="885" y="63" width="2" height="2" fill="#222"/><rect x="893" y="39" width="2" height="2" fill="#222"/><rect x="893" y="47" width="2" height="2" fill="#222"/><rect x="893" y="55" width="2" height="2" fill="#222"/><rect x="893" y="63" width="2" height="2" fill="#222"/><g transform="translate(935 47.8)"><line x1="6" y1="6" x2="14" y2="14" stroke="#555" stroke-width="3.6" stroke-linecap="round"/><circle cx="0" cy="0" r="11" fill="#d9d9d9" stroke="#aaa" stroke-width="1"/><circle cx="0" cy="0" r="8.5" fill="#5a8fd8"/><path d="M-5 0 H5 M0 -5 V5" stroke="#fff" stroke-width="2.5"/></g><g transform="translate(981.2 47.8)"><line x1="6" y1="6" x2="14" y2="14" stroke="#555" stroke-width="3.6" stroke-linecap="round"/><circle cx="0" cy="0" r="11" fill="#d9d9d9" stroke="#aaa" stroke-width="1"/><circle cx="0" cy="0" r="8.5" fill="#5a8fd8"/><path d="M-5 0 H5" stroke="#fff" stroke-width="2.5"/></g><g transform="translate(1027.2 47.8)"><line x1="6" y1="6" x2="14" y2="14" stroke="#555" stroke-width="3.6" stroke-linecap="round"/><circle cx="0" cy="0" r="11" fill="#d9d9d9" stroke="#aaa" stroke-width="1"/><circle cx="0" cy="0" r="8.5" fill="#5a8fd8"/><path d="M-5 -2 V-5 H-2 M2 -5 H5 V-2 M5 2 V5 H2 M-2 5 H-5 V2" fill="none" stroke="#fff" stroke-width="1.5"/></g><g transform="translate(1073.1 47.8)"><line x1="6" y1="6" x2="14" y2="14" stroke="#555" stroke-width="3.6" stroke-linecap="round"/><circle cx="0" cy="0" r="11" fill="#d9d9d9" stroke="#aaa" stroke-width="1"/><circle cx="0" cy="0" r="8.5" fill="#c6d6ea"/><path d="M-5 -2 V-5 H-2 M2 -5 H5 V-2 M5 2 V5 H2 M-2 5 H-5 V2" fill="none" stroke="#e06060" stroke-width="1.5"/></g><g transform="translate(1119.3 47.8)"><line x1="6" y1="6" x2="14" y2="14" stroke="#555" stroke-width="3.6" stroke-linecap="round"/><circle cx="0" cy="0" r="11" fill="#d9d9d9" stroke="#aaa" stroke-width="1"/><circle cx="0" cy="0" r="8.5" fill="#5a8fd8"/><path d="M5 0 H-2 M-5 0 L0 -5 M-5 0 L0 5" fill="none" stroke="#fff" stroke-width="2.5"/></g><rect x="1153.5" y="36.5" width="28" height="18" fill="#fff" stroke="#6a9ad8" stroke-width="1"/><g transform="translate(1167 53)"><line x1="6" y1="6" x2="14" y2="14" stroke="#555" stroke-width="3.6" stroke-linecap="round"/><circle cx="0" cy="0" r="11" fill="#d9d9d9" stroke="#aaa" stroke-width="1"/><circle cx="0" cy="0" r="8.5" fill="#5a8fd8"/></g><g transform="translate(1211.5 48)"><line x1="6" y1="6" x2="14" y2="14" stroke="#555" stroke-width="3.6" stroke-linecap="round"/><circle r="10" fill="#5a8fd8" stroke="#aaa"/><path d="M-12 0 H12 M0 -12 V12" stroke="#fff" stroke-width="2"/><path d="M-12 0 L-8 -3 V3 Z M12 0 L8 -3 V3 Z M0 -12 L-3 -8 H3 Z M0 12 L-3 8 H3 Z" fill="#fff" stroke="#6a9ad8" stroke-width="0.6"/></g><rect x="15.5" y="79" width="43" height="31.5" rx="6" fill="url(#btng)" stroke="#8a8a8a" stroke-width="2"/><defs><linearGradient id="btng" x1="0" y1="0" x2="0" y2="1"><stop offset="0" stop-color="#fdfdfd"/><stop offset="1" stop-color="#e4e4e4"/></linearGradient></defs><line x1="26.5" y1="100.5" x2="45" y2="88.5" stroke="#000" stroke-width="1.2"/><circle cx="26.5" cy="100.5" r="1.8" fill="#e00000"/><circle cx="45" cy="88.5" r="1.8" fill="#e00000"/><line x1="88" y1="101" x2="107" y2="88.5" stroke="#000" stroke-width="1.2"/><circle cx="88" cy="101" r="1.8" fill="#e00000"/><circle cx="107" cy="88.5" r="1.8" fill="#e00000"/><line x1="133" y1="100.5" x2="155" y2="86.5" stroke="#000" stroke-width="1.3"/><path d="M159.00 84.00 L149.89 85.51 L153.75 91.59 Z" fill="#000"/><path d="M129.00 103.00 L138.11 101.49 L134.25 95.41 Z" fill="#000"/><circle cx="144" cy="94" r="1.9" fill="#e00000"/><line x1="179" y1="101.5" x2="200" y2="87.8" stroke="#000" stroke-width="1.3"/><path d="M205.00 84.50 L195.92 86.14 L199.86 92.16 Z" fill="#000"/><circle cx="179" cy="101.5" r="1.9" fill="#e00000"/><path d="M236.5 94.5 L246.5 84 L250 94 L258 99 L253 104.5 L242 104.5 Z" fill="none" stroke="#444" stroke-width="0.9"/><line x1="236.5" y1="94.5" x2="246.5" y2="84" stroke="#f07070" stroke-width="1"/><circle cx="236.5" cy="94.5" r="1.8" fill="#f07070"/><circle cx="246.5" cy="84" r="1.8" fill="#f07070"/><path d="M299.5 98.5 L295.3 103.3 L303.4 106.6 L316 101.2" fill="none" stroke="#444" stroke-width="0.9"/><line x1="291.4" y1="89.2" x2="299.5" y2="98.5" stroke="#f07070" stroke-width="1"/><circle cx="291.4" cy="89.2" r="2" fill="#f07070"/><circle cx="299.5" cy="98.5" r="2" fill="#f07070"/><path d="M345.4 98.5 L341.2 103.3 L349.29999999999995 106.6 L361.9 101.2" fill="none" stroke="#444" stroke-width="0.9"/><line x1="337.29999999999995" y1="89.2" x2="345.4" y2="98.5" stroke="#f07070" stroke-width="1"/><circle cx="337.29999999999995" cy="89.2" r="2" fill="#f07070"/><circle cx="345.4" cy="98.5" r="2" fill="#f07070"/><defs><linearGradient id="ga3" x1="0" y1="0" x2="1" y2="0"><stop offset="0" stop-color="#b0dca0"/><stop offset="1" stop-color="#80c490"/></linearGradient></defs><g transform="translate(296.2 83.8) scale(0.69 0.69)"><path d="M0 0 L4 4.3 C7.5 -0.3 12.5 -3.5 17.5 -3.5 C23.5 -3.5 28.5 1.7 28.5 7.7 C28.5 14.7 21.5 19.7 12.6 20.5 C19.5 17.5 24 12.5 24 7.7 C24 3.7 21 0.1 17.5 0.1 C14.5 0.1 11 2.7 8.3 8.9 L13.3 14.3 L0 14.3 Z" fill="url(#ga3)" stroke="#70b080" stroke-width="1.30" stroke-linejoin="round"/></g><defs><linearGradient id="ga4" x1="0" y1="0" x2="1" y2="0"><stop offset="0" stop-color="#b0dca0"/><stop offset="1" stop-color="#80c490"/></linearGradient></defs><g transform="translate(361.9 83.8) scale(-0.69 0.69)"><path d="M0 0 L4 4.3 C7.5 -0.3 12.5 -3.5 17.5 -3.5 C23.5 -3.5 28.5 1.7 28.5 7.7 C28.5 14.7 21.5 19.7 12.6 20.5 C19.5 17.5 24 12.5 24 7.7 C24 3.7 21 0.1 17.5 0.1 C14.5 0.1 11 2.7 8.3 8.9 L13.3 14.3 L0 14.3 Z" fill="url(#ga4)" stroke="#70b080" stroke-width="1.30" stroke-linejoin="round"/></g><rect x="390" y="86" width="16" height="16" rx="4" fill="#c8c8c8"/><rect x="563" y="86" width="16" height="16" rx="4" fill="#c8c8c8"/><rect x="469.7" y="84.7" width="73.2" height="19.7" rx="5" fill="#fff"/><rect x="633.6" y="84.7" width="73.5" height="19.7" rx="5" fill="#fff"/></svg>
<div class="t" style="left:411.50px;top:88.31px;font-size:13.1px;color:#222;">Lengde:</div>
<div class="t" style="left:584.20px;top:88.31px;font-size:13.1px;color:#222;">Vinkel:</div>
<svg class="b" style="left:0px;top:0px;" width="80" height="844" viewBox="0 0 80 844"><line x1="14.2" y1="178.7" x2="20.6" y2="178.7" stroke="#111" stroke-width="1.1" /><line x1="17.4" y1="175.5" x2="17.4" y2="181.9" stroke="#111" stroke-width="1.1" /><circle cx="42.3" cy="168.4" r="1.6" fill="#ff0000"/><circle cx="42.3" cy="175.5" r="1.6" fill="#ff0000"/><circle cx="42.3" cy="182.4" r="1.6" fill="#ff0000"/><circle cx="42.3" cy="189.3" r="1.6" fill="#ff0000"/><circle cx="49.4" cy="168.4" r="1.6" fill="#ff0000"/><circle cx="49.4" cy="175.5" r="1.6" fill="#ff0000"/><circle cx="49.4" cy="182.4" r="1.6" fill="#ff0000"/><circle cx="49.4" cy="189.3" r="1.6" fill="#ff0000"/><circle cx="56.5" cy="168.4" r="1.6" fill="#ff0000"/><circle cx="56.5" cy="175.5" r="1.6" fill="#ff0000"/><circle cx="56.5" cy="182.4" r="1.6" fill="#ff0000"/><circle cx="56.5" cy="189.3" r="1.6" fill="#ff0000"/><circle cx="63.5" cy="168.4" r="1.6" fill="#ff0000"/><circle cx="63.5" cy="175.5" r="1.6" fill="#ff0000"/><circle cx="63.5" cy="182.4" r="1.6" fill="#ff0000"/><circle cx="63.5" cy="189.3" r="1.6" fill="#ff0000"/><path d="M16.5 213 Q17.5 223 27.6 224.4" fill="none" stroke="#111" stroke-width="1.1"/><line x1="8.9" y1="221.9" x2="27.6" y2="231.6" stroke="#111" stroke-width="1.1" /><circle cx="16.5" cy="213" r="1.7" fill="#ff0000"/><circle cx="27.6" cy="224.4" r="1.7" fill="#ff0000"/><circle cx="8.9" cy="221.9" r="1.7" fill="#ff0000"/><circle cx="27.6" cy="231.6" r="1.7" fill="#ff0000"/><line x1="42.3" y1="222.8" x2="63.6" y2="211" stroke="#111" stroke-width="1.1" /><path d="M51 232.5 Q52 222 63.6 219.7" fill="none" stroke="#111" stroke-width="1.1"/><circle cx="42.3" cy="222.8" r="1.6" fill="#ff0000"/><circle cx="47.6" cy="219.7" r="1.6" fill="#ff0000"/><circle cx="53" cy="216.9" r="1.6" fill="#ff0000"/><circle cx="58.3" cy="213.9" r="1.6" fill="#ff0000"/><circle cx="63.6" cy="211" r="1.6" fill="#ff0000"/><circle cx="51" cy="232.5" r="1.6" fill="#ff0000"/><circle cx="52.1" cy="227.6" r="1.6" fill="#ff0000"/><circle cx="54.2" cy="223.3" r="1.6" fill="#ff0000"/><circle cx="58.7" cy="220.8" r="1.6" fill="#ff0000"/><circle cx="63.6" cy="219.7" r="1.6" fill="#ff0000"/><line x1="9.8" y1="246.8" x2="19.2" y2="258.3" stroke="#111" stroke-width="1.1" /><line x1="19.2" y1="258.3" x2="28.1" y2="254.8" stroke="#111" stroke-width="1.1" /><path d="M19.2 258.3 Q15.8 262 15.6 266.7" fill="none" stroke="#111" stroke-width="1.1"/><path d="M16 254 A4 4 0 0 1 24 254.5" fill="none" stroke="#555" stroke-width="0.6"/><circle cx="19.2" cy="258.3" r="1.7" fill="#ff0000"/><circle cx="56.9" cy="253.9" r="6.4" fill="none" stroke="#111" stroke-width="1.1"/><line x1="43" y1="265.4" x2="51" y2="251.2" stroke="#111" stroke-width="1.1" /><circle cx="51" cy="251.2" r="1.7" fill="#ff0000"/><line x1="6.8" y1="292.4" x2="28.1" y2="281.8" stroke="#111" stroke-width="1.1" /><circle cx="17.2" cy="287.1" r="1.7" fill="#ff0000"/><path d="M15.6 302.2 Q16.5 291 28.1 289.2" fill="none" stroke="#111" stroke-width="1.1"/><circle cx="27.9" cy="301.9" r="1.7" fill="#ff0000"/><circle cx="52.8" cy="291.9" r="10.1" fill="none" stroke="#111" stroke-width="1.1"/><circle cx="52.8" cy="291.9" r="1.7" fill="#ff0000"/><circle cx="52.8" cy="281.8" r="1.7" fill="#ff0000"/><circle cx="52.8" cy="302" r="1.7" fill="#ff0000"/><circle cx="42.7" cy="291.9" r="1.7" fill="#ff0000"/><circle cx="62.9" cy="291.9" r="1.7" fill="#ff0000"/><line x1="7.1" y1="335.8" x2="28.8" y2="324.1" stroke="#111" stroke-width="1.1" /><circle cx="17.7" cy="330.1" r="1.7" fill="#ff0000"/><path d="M15.5 345.7 Q16 334 28.8 332.5" fill="none" stroke="#111" stroke-width="1.1"/><circle cx="19.2" cy="336.2" r="1.7" fill="#ff0000"/><rect x="41.8" y="326" width="23" height="18" fill="none" stroke="#333" stroke-width="1.6"/><line x1="43.5" y1="342.5" x2="63" y2="327.5" stroke="#888" stroke-width="0.6" stroke-dasharray="1.5 1.5"/><circle cx="52.8" cy="334.8" r="1.7" fill="#ff0000"/><line x1="9.1" y1="377.9" x2="29.2" y2="367.8" stroke="#111" stroke-width="1.1" /><line x1="8" y1="373" x2="14" y2="371" stroke="#111" stroke-width="1.1" /><path d="M6 373.5 L10 370 L10.5 375 Z" fill="#111"/><path d="M16.5 387.6 Q17 377 29.2 375.1" fill="none" stroke="#111" stroke-width="1.1"/><circle cx="15.1" cy="374.9" r="1.7" fill="#ff0000"/><circle cx="19.2" cy="380" r="1.7" fill="#ff0000"/><path d="M20.2 388 L21.5 382 L23 386 Z" fill="#111"/><line x1="42.4" y1="378.6" x2="63.8" y2="367.1" stroke="#111" stroke-width="0.9" stroke-dasharray="2 2"/><circle cx="49.7" cy="374.6" r="1.9" fill="#ff0000"/><circle cx="63.8" cy="367.1" r="1.4" fill="#111"/><circle cx="42.4" cy="378.6" r="1.4" fill="#111"/><path d="M41 375.3 L47.5 371.3 L45.5 375.5 Z" fill="#111" stroke="#111" stroke-width="0.8"/><text x="40.2" y="390.8" font-size="10.5" fill="#111" font-family="Liberation Sans">1</text><text x="60.3" y="381" font-size="10.5" fill="#111" font-family="Liberation Sans">2</text><line x1="6" y1="418.9" x2="30.3" y2="425.9" stroke="#111" stroke-width="1.1" /><line x1="24.2" y1="408.8" x2="18.6" y2="433" stroke="#111" stroke-width="1.1" /><circle cx="20.8" cy="423.3" r="1.7" fill="#ff0000"/><line x1="43.4" y1="422.5" x2="53.4" y2="425.9" stroke="#111" stroke-width="1.1" /><line x1="62.5" y1="412.8" x2="60.1" y2="422.9" stroke="#111" stroke-width="1.1" /><circle cx="58.5" cy="427.5" r="1.7" fill="#ff0000"/><text x="6.6" y="502.5" font-size="10.5" fill="#111" font-family="Liberation Sans">y</text><path d="M15 495.8 V511 H30.8" fill="none" stroke="#333" stroke-width="1.1"/><text x="24.2" y="519.3" font-size="10.5" fill="#111" font-family="Liberation Sans">x</text><circle cx="27.8" cy="496.9" r="1.7" fill="#ff0000"/><path d="M41.3 516.3 L57.5 499.7 M41.3 516.3 H64.9 M57.5 499.7 Q64 506 64.9 516.3" fill="none" stroke="#111" stroke-width="1.1"/><circle cx="57.5" cy="499.7" r="1.7" fill="#ff0000"/><text x="44" y="506.6" font-size="10.5" fill="#111" font-family="Liberation Sans">r</text><text x="54.6" y="513.3" font-size="10.5" fill="#111" font-family="Liberation Sans">a</text><path d="M9.7 541.9 H25.8 M9.7 541.9 V557.6" fill="none" stroke="#777" stroke-width="0.6"/><circle cx="9.7" cy="541.9" r="2.2" fill="#ff0000"/><circle cx="25.8" cy="541.9" r="1.3" fill="#111"/><circle cx="9.7" cy="557.6" r="1.3" fill="#111"/><text x="13" y="560.6" font-size="10.5" fill="#111" font-family="Liberation Sans">1</text><text x="23.2" y="553.7" font-size="10.5" fill="#111" font-family="Liberation Sans">2</text><path d="M44.4 557.6 H61.1 V541.9" fill="none" stroke="#777" stroke-width="0.6"/><circle cx="61.1" cy="558" r="2.3" fill="#ff0000"/><circle cx="44.4" cy="557.6" r="1.3" fill="#111"/><circle cx="61.1" cy="541.9" r="1.3" fill="#111"/><text x="42" y="554" font-size="10.5" fill="#111" font-family="Liberation Sans">1</text><text x="53" y="546.9" font-size="10.5" fill="#111" font-family="Liberation Sans">2</text><path d="M8 584 H27 V598 L20 600 L17 602 H12 V596 H8 Z" fill="none" stroke="#f0b0b0" stroke-width="0.8"/><circle cx="14.1" cy="590.9" r="3.2" fill="none" stroke="#f0a0a0" stroke-width="0.8"/><path d="M18 597 L24 591 V597 Z" fill="none" stroke="#f0b0b0" stroke-width="0.8"/><circle cx="18.2" cy="592.9" r="1.6" fill="#f06060"/><line x1="15" y1="636.3" x2="21.4" y2="636.3" stroke="#444" stroke-width="1.1" /><line x1="18.2" y1="633.1" x2="18.2" y2="639.5" stroke="#444" stroke-width="1.1" /><line x1="41.3" y1="635.7" x2="64.1" y2="635.7" stroke="#111" stroke-width="1.1" /><line x1="52.4" y1="624.2" x2="52.4" y2="647.4" stroke="#111" stroke-width="1.1" /><circle cx="52.4" cy="635.7" r="3.3" fill="none" stroke="#ff0000" stroke-width="0.9"/><line x1="49.1" y1="635.7" x2="55.699999999999996" y2="635.7" stroke="#ff0000" stroke-width="1.3" /><line x1="52.4" y1="632.4000000000001" x2="52.4" y2="639.0" stroke="#ff0000" stroke-width="1.3" /><line x1="6.2" y1="670.4" x2="29.3" y2="670.4" stroke="#111" stroke-width="1.1" /><circle cx="17.2" cy="670.4" r="3.3" fill="none" stroke="#ff0000" stroke-width="0.9"/><line x1="13.899999999999999" y1="670.4" x2="20.5" y2="670.4" stroke="#ff0000" stroke-width="1.3" /><line x1="17.2" y1="667.1" x2="17.2" y2="673.6999999999999" stroke="#ff0000" stroke-width="1.3" /><line x1="52.4" y1="658.9" x2="52.4" y2="682.4" stroke="#111" stroke-width="1.1" /><circle cx="52.4" cy="670.4" r="3.3" fill="none" stroke="#ff0000" stroke-width="0.9"/><line x1="49.1" y1="670.4" x2="55.699999999999996" y2="670.4" stroke="#ff0000" stroke-width="1.3" /><line x1="52.4" y1="667.1" x2="52.4" y2="673.6999999999999" stroke="#ff0000" stroke-width="1.3" /><line x1="8.9" y1="714.9" x2="27.6" y2="704.2" stroke="#111" stroke-width="1.1" /><circle cx="8.9" cy="714.9" r="3.4" fill="none" stroke="#ff0000" stroke-width="0.9"/><line x1="5.5" y1="714.9" x2="12.3" y2="714.9" stroke="#ff0000" stroke-width="1.3" /><line x1="8.9" y1="711.5" x2="8.9" y2="718.3" stroke="#ff0000" stroke-width="1.3" /><line x1="9" y1="694.5" x2="9.3" y2="698" stroke="#8a8a8a" stroke-width="1.0" /><line x1="13.5" y1="695.3" x2="14.4" y2="698.8" stroke="#8a8a8a" stroke-width="1.0" /><line x1="18" y1="697.2" x2="19.3" y2="700.2" stroke="#8a8a8a" stroke-width="1.0" /><line x1="22.3" y1="700.5" x2="24" y2="703" stroke="#8a8a8a" stroke-width="1.0" /><line x1="26.5" y1="710.4" x2="28.5" y2="711.8" stroke="#8a8a8a" stroke-width="1.0" /><line x1="26" y1="716" x2="30" y2="716" stroke="#8a8a8a" stroke-width="1.0" /><circle cx="15.1" cy="743.3" r="3.2" fill="none" stroke="#ff0000" stroke-width="0.9"/><line x1="11.899999999999999" y1="743.3" x2="18.3" y2="743.3" stroke="#ff0000" stroke-width="1.3" /><line x1="15.1" y1="740.0999999999999" x2="15.1" y2="746.5" stroke="#ff0000" stroke-width="1.3" /><path d="M16.2 745.5 V756 L18.5 753.8 L20.5 758 L22 757.2 L20 753.2 L23 753 Z" fill="#fff" stroke="#444" stroke-width="0.7"/><ellipse cx="46.2" cy="744.2" rx="2.2" ry="3.6" fill="none" stroke="#000" stroke-width="1.3"/><path d="M48.5 743.6 H61.900000000000006 M57.2 743.6 V747.4000000000001 M61.1 743.6 V748.0" stroke="#000" stroke-width="1.9" fill="none"/><circle cx="52.4" cy="756.7" r="3.2" fill="none" stroke="#ff0000" stroke-width="0.9"/><line x1="49.199999999999996" y1="756.7" x2="55.6" y2="756.7" stroke="#ff0000" stroke-width="1.3" /><line x1="52.4" y1="753.5" x2="52.4" y2="759.9000000000001" stroke="#ff0000" stroke-width="1.3" /><ellipse cx="10.7" cy="792" rx="2.2" ry="3.6" fill="none" stroke="#000" stroke-width="1.3"/><path d="M13.0 791.4 H26.4 M21.7 791.4 V795.2 M25.6 791.4 V795.8" stroke="#000" stroke-width="1.9" fill="none"/></svg>
<svg class="b" style="left:95px;top:117px;" width="16" height="16" viewBox="0 0 16 16"><circle cx="7.1" cy="7.7" r="5.3" fill="#f2f2f2" stroke="#2a3c88" stroke-width="2.2"/><path d="M4.5 8 H9 M7 5.5 V10" stroke="#c0a0a0" stroke-width="0.6"/><path d="M8 8.5 L11.6 12.2" stroke="#f0b020" stroke-width="2.2"/><path d="M11.6 12.2 L12.8 13.4" stroke="#e07070" stroke-width="2.2"/></svg>
</body></html>
